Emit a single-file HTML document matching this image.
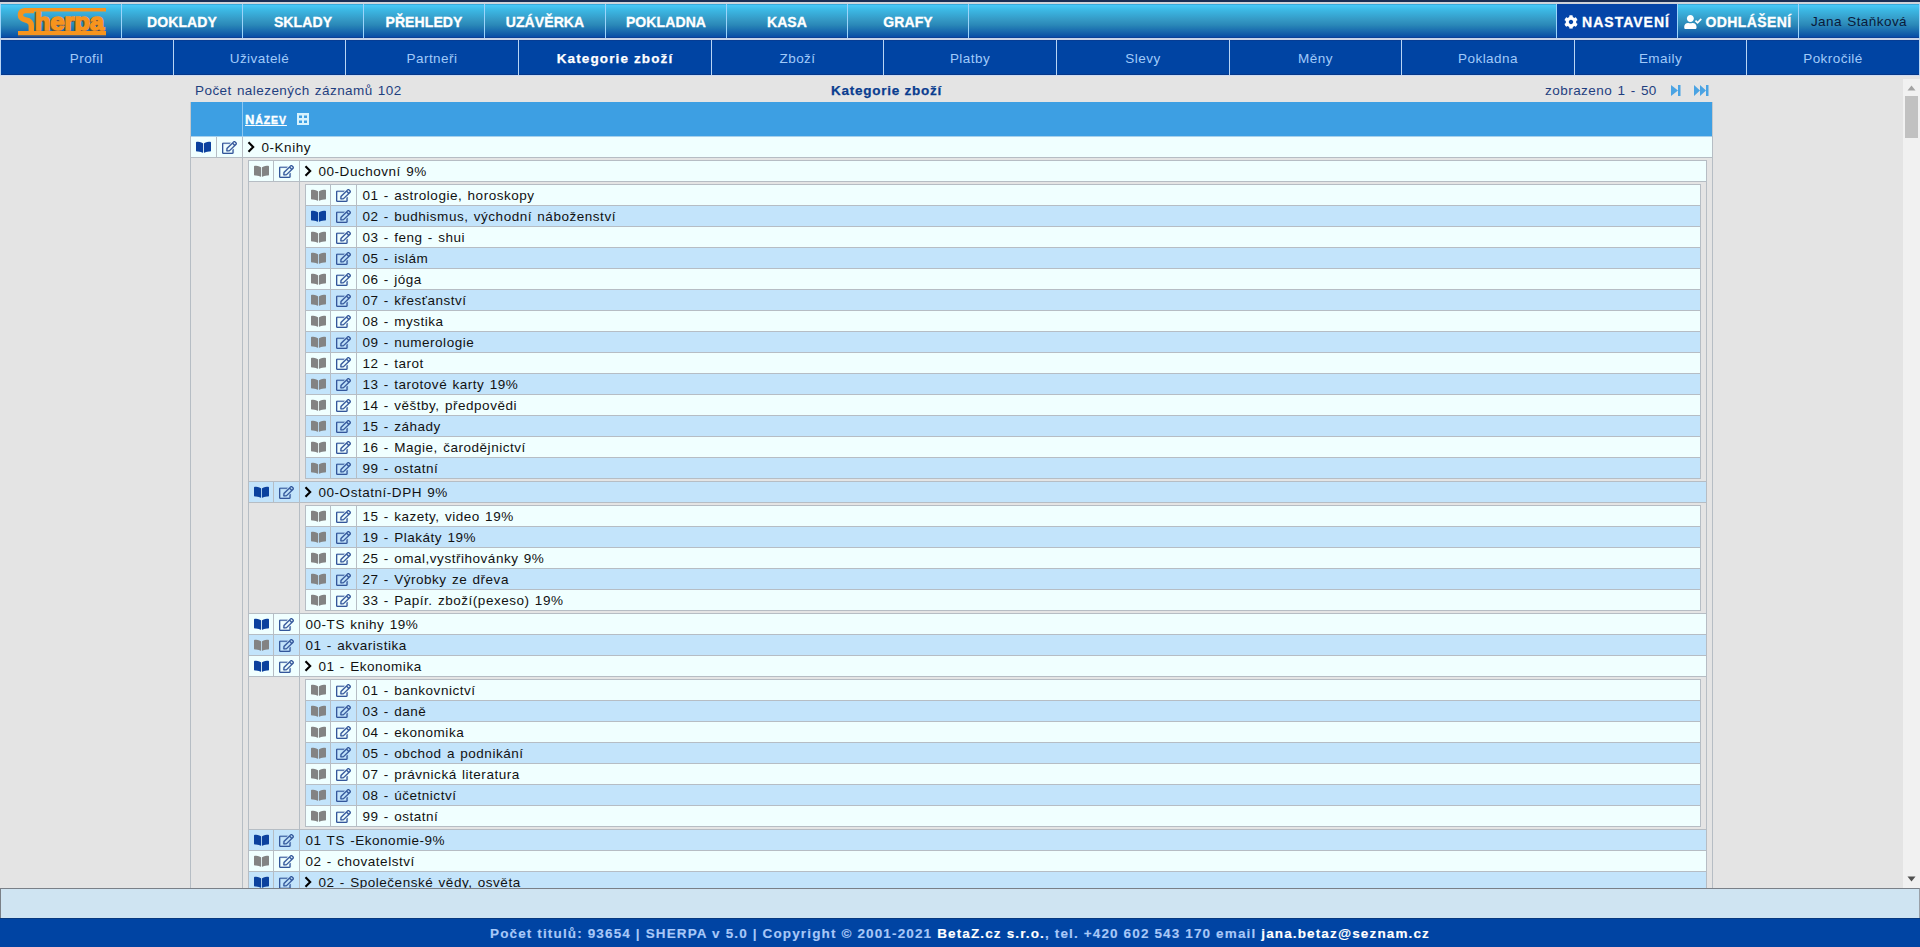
<!DOCTYPE html>
<html><head><meta charset="utf-8"><title>Kategorie zboží</title>
<style>
*{box-sizing:border-box;margin:0;padding:0}
html,body{width:1920px;height:947px;overflow:hidden;background:#e4e4e4;font-family:"Liberation Sans", sans-serif;}
.a{position:absolute}
.nav{position:absolute;top:4px;height:34px;background:linear-gradient(#2a8cc0 0px,#48c8f8 1px,#3cb8e4 6px,#3498c4 16px,#2a88b8 21px,#1c70b0 26px,#0e58a8 31px,#0448a8 34px);}
.navt{color:#fff;font-weight:bold;font-size:14px;line-height:36px;text-align:center;letter-spacing:0.1px;-webkit-text-stroke:0.3px #fff}
.sep{position:absolute;width:1px;background:#9cd4fa}
.sub{position:absolute;top:40px;height:35px;background:#0044a3;color:#a0cafa;font-size:13.5px;line-height:37px;text-align:center;letter-spacing:0.45px}
.t{font-size:13.5px;letter-spacing:0.53px;word-spacing:1.0px;color:#111111;white-space:pre;line-height:20px}
svg{display:block}
</style></head><body>

<div class="a" style="left:0;top:0;width:1920px;height:2px;background:#1a2e55"></div>
<div class="a" style="left:0;top:2px;width:1920px;height:2px;background:#cfd3da"></div>
<div class="a" style="left:0;top:38px;width:1920px;height:2px;background:#c8d4e8"></div>
<div class="nav" style="left:0;width:1920px"></div>
<div class="a" style="left:1557px;top:4px;width:120px;height:34px;background:#0545a8"></div>
<div class="a" style="left:0;top:37px;width:1920px;height:1px;background:#0a4196"></div>
<div class="sep" style="left:0px;top:4px;height:34px"></div>
<div class="sep" style="left:121px;top:4px;height:34px"></div>
<div class="sep" style="left:242px;top:4px;height:34px"></div>
<div class="sep" style="left:363px;top:4px;height:34px"></div>
<div class="sep" style="left:484px;top:4px;height:34px"></div>
<div class="sep" style="left:605px;top:4px;height:34px"></div>
<div class="sep" style="left:726px;top:4px;height:34px"></div>
<div class="sep" style="left:847px;top:4px;height:34px"></div>
<div class="sep" style="left:968px;top:4px;height:34px"></div>
<div class="sep" style="left:1556px;top:4px;height:34px"></div>
<div class="sep" style="left:1677px;top:4px;height:34px"></div>
<div class="sep" style="left:1798px;top:4px;height:34px"></div>
<div class="sep" style="left:1919px;top:4px;height:34px"></div>
<div class="a navt" style="left:122px;top:4px;width:120px;height:34px">DOKLADY</div>
<div class="a navt" style="left:243px;top:4px;width:120px;height:34px">SKLADY</div>
<div class="a navt" style="left:364px;top:4px;width:120px;height:34px">PŘEHLEDY</div>
<div class="a navt" style="left:485px;top:4px;width:120px;height:34px">UZÁVĚRKA</div>
<div class="a navt" style="left:606px;top:4px;width:120px;height:34px">POKLADNA</div>
<div class="a navt" style="left:727px;top:4px;width:120px;height:34px">KASA</div>
<div class="a navt" style="left:848px;top:4px;width:120px;height:34px">GRAFY</div>
<svg class="a" style="left:0;top:0" width="121" height="40" viewBox="0 0 121 40">
<defs><clipPath id="lc"><rect x="0" y="4" width="121" height="34"/></clipPath><clipPath id="lt"><rect x="0" y="11" width="121" height="20"/></clipPath></defs>
<g clip-path="url(#lc)">
<g clip-path="url(#lt)"><g transform="translate(-1,1)" fill="#6a5040" stroke="#6a5040" stroke-width="1.6">
<text x="35" y="29.5" font-family="Liberation Sans" font-weight="bold" font-size="24" textLength="69" lengthAdjust="spacingAndGlyphs">herpa</text>
</g></g>
<path d="M34 10.6 L25.5 10.6 C21.5 10.6 20.4 12.6 20.4 15 C20.4 18 23 19.3 26 20 C30 20.8 31.3 23 31.3 26 L31.3 32" stroke="#f7941d" stroke-width="5.4" fill="none"/>
<rect x="24" y="8" width="82" height="3.5" fill="#f7941d"/>
<rect x="18" y="36" width="88" height="1" fill="#5a4a50" opacity="0.6"/>
<text clip-path="url(#lt)" x="35" y="29.5" fill="#f7941d" stroke="#f7941d" stroke-width="1.6" font-family="Liberation Sans" font-weight="bold" font-size="24" textLength="69" lengthAdjust="spacingAndGlyphs">herpa</text>
<rect x="18" y="31" width="88" height="4.3" fill="#f7941d"/>
</g>
</svg>
<div class="a navt" style="left:1557px;top:4px;width:120px;height:34px"><span style="letter-spacing:1.0px"><svg width="14" height="14" viewBox="0 0 512 512" style="display:inline-block;vertical-align:-2px;margin-right:4px"><path fill="#fff" d="M487.4 315.7l-42.6-24.6c4.3-23.2 4.3-47 0-70.2l42.6-24.6c4.9-2.8 7.100-8.600 5.500-14-11.100-35.600-30-67.800-54.700-94.600-3.800-4.100-10-5.100-14.800-2.300L380.800 110c-17.900-15.400-38.500-27.300-60.800-35.100V25.800c0-5.600-3.900-10.500-9.400-11.700-36.700-8.200-74.300-7.800-109.200 0-5.500 1.200-9.400 6.100-9.400 11.700V75c-22.200 7.900-42.800 19.800-60.800 35.100L88.700 85.500c-4.900-2.800-11-1.900-14.800 2.300-24.700 26.700-43.600 58.900-54.700 94.600-1.700 5.400.6 11.200 5.500 14L67.300 221c-4.300 23.200-4.300 47 0 70.200l-42.600 24.600c-4.900 2.800-7.100 8.600-5.500 14 11.100 35.600 30 67.800 54.700 94.600 3.800 4.100 10 5.100 14.800 2.300l42.600-24.600c17.900 15.400 38.500 27.300 60.800 35.100v49.200c0 5.600 3.900 10.500 9.400 11.700 36.700 8.200 74.300 7.800 109.200 0 5.500-1.200 9.400-6.100 9.400-11.700v-49.200c22.200-7.900 42.800-19.800 60.800-35.100l42.600 24.600c4.900 2.800 11 1.900 14.800-2.300 24.700-26.700 43.600-58.900 54.700-94.600 1.500-5.500-.7-11.300-5.600-14.100zM256 336c-44.100 0-80-35.900-80-80s35.900-80 80-80 80 35.900 80 80-35.900 80-80 80z"/></svg>NASTAVENÍ</span></div>
<div class="a navt" style="left:1678px;top:4px;width:120px;height:34px"><span style="letter-spacing:0.4px"><svg width="18" height="14" viewBox="0 0 640 512" style="display:inline-block;vertical-align:-2px;margin-right:3px"><path fill="#fff" d="M224 256c70.700 0 128-57.300 128-128S294.700 0 224 0 96 57.300 96 128s57.300 128 128 128zm89.600 32h-16.700c-22.200 10.200-46.900 16-72.900 16s-50.600-5.800-72.900-16h-16.700C60.200 288 0 348.200 0 422.400V464c0 26.500 21.500 48 48 48h352c26.500 0 48-21.500 48-48v-41.600c0-74.200-60.200-134.400-134.400-134.400zm323-128.400l-27.800-28.100c-4.600-4.700-12.100-4.700-16.800-.1l-104.800 104-45.500-45.800c-4.600-4.700-12.100-4.700-16.800-.1l-28.100 27.900c-4.700 4.600-4.700 12.100-.1 16.800l81.700 82.300c4.600 4.700 12.100 4.700 16.800.1l141.300-140.200c4.600-4.700 4.700-12.200.1-16.800z"/></svg>ODHLÁŠENÍ</span></div>
<div class="a" style="left:1799px;top:4px;width:120px;height:34px;line-height:35px;text-align:center;color:#0a1a3a;font-size:13.5px;letter-spacing:0.45px;word-spacing:1px">Jana Staňková</div>
<div class="sub" style="left:0;width:1920px"></div>
<div class="sub" style="left:0px;width:173px;">Profil</div>
<div class="sub" style="left:174px;width:171px;">Uživatelé</div>
<div class="sub" style="left:346px;width:172px;">Partneři</div>
<div class="sub" style="left:519px;width:192px;color:#fff;font-weight:bold;letter-spacing:1.12px;-webkit-text-stroke:0.25px #fff;">Kategorie zboží</div>
<div class="sub" style="left:712px;width:171px;">Zboží</div>
<div class="sub" style="left:884px;width:172px;">Platby</div>
<div class="sub" style="left:1057px;width:172px;">Slevy</div>
<div class="sub" style="left:1230px;width:171px;">Měny</div>
<div class="sub" style="left:1402px;width:172px;">Pokladna</div>
<div class="sub" style="left:1575px;width:171px;">Emaily</div>
<div class="sub" style="left:1747px;width:172px;">Pokročilé</div>
<div class="a" style="left:0;top:40px;width:1920px;height:1px;background:#053c94"></div>
<div class="a" style="left:0;top:74px;width:1920px;height:1px;background:#06388a"></div>
<div class="sep" style="left:0px;top:40px;height:35px;background:#b8d4f4"></div>
<div class="sep" style="left:173px;top:40px;height:35px;background:#b8d4f4"></div>
<div class="sep" style="left:345px;top:40px;height:35px;background:#b8d4f4"></div>
<div class="sep" style="left:518px;top:40px;height:35px;background:#b8d4f4"></div>
<div class="sep" style="left:711px;top:40px;height:35px;background:#b8d4f4"></div>
<div class="sep" style="left:883px;top:40px;height:35px;background:#b8d4f4"></div>
<div class="sep" style="left:1056px;top:40px;height:35px;background:#b8d4f4"></div>
<div class="sep" style="left:1229px;top:40px;height:35px;background:#b8d4f4"></div>
<div class="sep" style="left:1401px;top:40px;height:35px;background:#b8d4f4"></div>
<div class="sep" style="left:1574px;top:40px;height:35px;background:#b8d4f4"></div>
<div class="sep" style="left:1746px;top:40px;height:35px;background:#b8d4f4"></div>
<div class="sep" style="left:1919px;top:40px;height:35px;background:#b8d4f4"></div>
<div class="a" style="left:0;top:75px;width:1920px;height:1px;background:#d0ddf2"></div>
<div class="a t" style="left:195px;top:81px;color:#1f3f7f;letter-spacing:0.44px;word-spacing:1px">Počet nalezených záznamů 102</div>
<div class="a t" style="left:0;top:81px;width:1773px;text-align:center;color:#0a3d8f;font-weight:bold;letter-spacing:0.75px;word-spacing:0;-webkit-text-stroke:0.25px #0a3d8f">Kategorie zboží</div>
<div class="a t" style="left:1545px;top:81px;color:#1f3f7f;letter-spacing:0.47px;word-spacing:1px">zobrazeno 1 - 50</div>
<svg class="a" style="left:1671px;top:85px" width="10" height="11" viewBox="0 0 10 11"><path d="M0 0 L7 5.5 L0 11Z" fill="#4aa3e3"/><rect x="7" y="0" width="2.5" height="11" fill="#4aa3e3"/></svg>
<svg class="a" style="left:1694px;top:85px" width="15" height="11" viewBox="0 0 15 11"><path d="M0 0 L6 5.5 L0 11Z M6 0 L12 5.5 L6 11Z" fill="#4aa3e3"/><rect x="12" y="0" width="2.5" height="11" fill="#4aa3e3"/></svg>
<div class="a" style="left:0;top:76px;width:1903px;height:812px;overflow:hidden">
<div class="a" style="left:191px;top:26px;width:1521px;height:34px;background:#3d9fe3;"></div>
<div class="a" style="left:191px;top:60px;width:1521px;height:1px;background:#a6d0ec;"></div>
<div class="a" style="left:190px;top:26px;width:1px;height:35px;background:#c4c8cc;"></div>
<div class="a" style="left:1712px;top:26px;width:1px;height:35px;background:#c4c8cc;"></div>
<div class="a" style="left:242px;top:26px;width:1px;height:34px;background:#8cc8f2;"></div>
<div class="a" style="left:245px;top:37px;line-height:14px;color:#fff;font-weight:bold;font-size:13px;text-decoration:underline;letter-spacing:0.9px;white-space:pre;-webkit-text-stroke:0.35px #fff">N<span style="font-size:10.5px">ÁZEV</span></div>
<svg class="a" style="left:297px;top:37px" width="12" height="12" viewBox="0 0 12 12"><path fill="#e8fbff" fill-rule="evenodd" d="M0 0H12V12H0Z M2 2.5H5V5H2Z M7 2.5H10V5H7Z M2 7.5H5V10H2Z M7 7.5H10V10H7Z" opacity="0.9"/></svg>
<div class="a" style="left:191px;top:61px;width:1521px;height:20px;background:#f0ffff;"></div>
<div class="a" style="left:190px;top:60px;width:1px;height:22px;background:#b6bdc4;"></div>
<div class="a" style="left:1712px;top:60px;width:1px;height:22px;background:#b6bdc4;"></div>
<div class="a" style="left:216px;top:61px;width:1px;height:20px;background:#b6bdc4;"></div>
<div class="a" style="left:242px;top:61px;width:1px;height:20px;background:#b6bdc4;"></div>
<div class="a" style="left:190px;top:81px;width:1523px;height:1px;background:#b6bdc4;"></div>
<svg class="a" style="left:196.2px;top:64.5px" width="15" height="12.5" viewBox="0 0 576 512" preserveAspectRatio="none"><path fill="#0b419e" d="M542.22 32.05c-54.8 3.11-163.72 14.43-230.96 55.59-4.64 2.84-7.27 7.89-7.27 13.17v363.87c0 11.55 12.63 18.85 23.28 13.49 69.18-34.82 169.23-44.32 218.7-46.92 16.89-.89 30.02-14.43 30.02-30.66V62.75c.01-17.71-15.35-31.74-33.77-30.7zM264.73 87.64C197.5 46.48 88.58 35.170 33.78 32.05 15.36 31.01 0 45.04 0 62.75V400.6c0 16.24 13.13 29.78 30.02 30.66 49.49 2.6 149.59 12.11 218.77 46.950 10.62 5.35 23.21-1.94 23.21-13.46V100.63c0-5.29-2.62-10.14-7.27-12.99z"/></svg>
<svg class="a" style="left:222.0px;top:65px" width="15" height="13" viewBox="0 0 576 512" preserveAspectRatio="none"><path fill="#34589c" stroke="#34589c" stroke-width="6" d="M402.3 344.9l32-32c5-5 13.7-1.5 13.7 5.7V464c0 26.5-21.5 48-48 48H48c-26.5 0-48-21.5-48-48V112c0-26.5 21.5-48 48-48h273.5c7.1 0 10.7 8.6 5.7 13.7l-32 32c-1.5 1.5-3.5 2.3-5.7 2.3H48v352h352V350.5c0-2.1.8-4.1 2.3-5.6zm156.6-201.8L296.3 405.7l-90.4 10c-26.2 2.9-48.5-19.2-45.6-45.6l10-90.4L432.9 17.1c22.9-22.9 59.9-22.9 82.7 0l43.2 43.2c22.9 22.9 22.9 60 .1 82.8zM460.1 174L402 115.9 216.2 301.8l-7.3 65.3 65.3-7.3L460.1 174zm64.8-79.7l-43.2-43.2c-4.1-4.1-10.8-4.1-14.8 0L436 82l58.1 58.1 30.9-30.9c4-4.2 4-10.8-.1-14.9z"/></svg>
<svg class="a" style="left:247px;top:65px" width="8" height="12" viewBox="0 0 8 12"><path d="M1.5 1.2 L6.2 6 L1.5 10.8" stroke="#000" stroke-width="2.1" fill="none"/></svg>
<div class="a t" style="left:261.5px;top:62px">0-Knihy</div>
<div class="a" style="left:190px;top:82px;width:1px;height:742px;background:#b6bdc4;"></div>
<div class="a" style="left:242px;top:82px;width:1px;height:742px;background:#b6bdc4;"></div>
<div class="a" style="left:1712px;top:82px;width:1px;height:742px;background:#b6bdc4;"></div>
<div class="a" style="left:190px;top:824px;width:1523px;height:1px;background:#b6bdc4;"></div>
<div class="a" style="left:248px;top:84px;width:1459px;height:1px;background:#b6bdc4;"></div>
<div class="a" style="left:249px;top:85px;width:1457px;height:20px;background:#f0ffff;"></div>
<div class="a" style="left:248px;top:84px;width:1px;height:22px;background:#b6bdc4;"></div>
<div class="a" style="left:1706px;top:84px;width:1px;height:22px;background:#b6bdc4;"></div>
<div class="a" style="left:273px;top:85px;width:1px;height:20px;background:#b6bdc4;"></div>
<div class="a" style="left:299px;top:85px;width:1px;height:20px;background:#b6bdc4;"></div>
<div class="a" style="left:248px;top:105px;width:1459px;height:1px;background:#b6bdc4;"></div>
<svg class="a" style="left:253.5px;top:88.5px" width="15" height="12.5" viewBox="0 0 576 512" preserveAspectRatio="none"><path fill="#838383" d="M542.22 32.05c-54.8 3.11-163.72 14.43-230.96 55.59-4.64 2.84-7.27 7.89-7.27 13.17v363.87c0 11.55 12.63 18.85 23.28 13.49 69.18-34.82 169.23-44.32 218.7-46.92 16.89-.89 30.02-14.43 30.02-30.66V62.75c.01-17.71-15.35-31.74-33.77-30.7zM264.73 87.64C197.5 46.48 88.58 35.170 33.78 32.05 15.36 31.01 0 45.04 0 62.75V400.6c0 16.24 13.13 29.78 30.02 30.66 49.49 2.6 149.59 12.11 218.77 46.950 10.62 5.35 23.21-1.94 23.21-13.46V100.63c0-5.29-2.62-10.14-7.27-12.99z"/></svg>
<svg class="a" style="left:279.0px;top:89px" width="15" height="13" viewBox="0 0 576 512" preserveAspectRatio="none"><path fill="#34589c" stroke="#34589c" stroke-width="6" d="M402.3 344.9l32-32c5-5 13.7-1.5 13.7 5.7V464c0 26.5-21.5 48-48 48H48c-26.5 0-48-21.5-48-48V112c0-26.5 21.5-48 48-48h273.5c7.1 0 10.7 8.6 5.7 13.7l-32 32c-1.5 1.5-3.5 2.3-5.7 2.3H48v352h352V350.5c0-2.1.8-4.1 2.3-5.6zm156.6-201.8L296.3 405.7l-90.4 10c-26.2 2.9-48.5-19.2-45.6-45.6l10-90.4L432.9 17.1c22.9-22.9 59.9-22.9 82.7 0l43.2 43.2c22.9 22.9 22.9 60 .1 82.8zM460.1 174L402 115.9 216.2 301.8l-7.3 65.3 65.3-7.3L460.1 174zm64.8-79.7l-43.2-43.2c-4.1-4.1-10.8-4.1-14.8 0L436 82l58.1 58.1 30.9-30.9c4-4.2 4-10.8-.1-14.9z"/></svg>
<svg class="a" style="left:304px;top:89px" width="8" height="12" viewBox="0 0 8 12"><path d="M1.5 1.2 L6.2 6 L1.5 10.8" stroke="#000" stroke-width="2.1" fill="none"/></svg>
<div class="a t" style="left:318.5px;top:86px">00-Duchovní 9%</div>
<div class="a" style="left:305px;top:108px;width:1396px;height:1px;background:#b6bdc4;"></div>
<div class="a" style="left:306px;top:109px;width:1394px;height:20px;background:#f0ffff;"></div>
<div class="a" style="left:305px;top:108px;width:1px;height:22px;background:#b6bdc4;"></div>
<div class="a" style="left:1700px;top:108px;width:1px;height:22px;background:#b6bdc4;"></div>
<div class="a" style="left:330px;top:109px;width:1px;height:20px;background:#b6bdc4;"></div>
<div class="a" style="left:356px;top:109px;width:1px;height:20px;background:#b6bdc4;"></div>
<div class="a" style="left:305px;top:129px;width:1396px;height:1px;background:#b6bdc4;"></div>
<svg class="a" style="left:310.5px;top:112.5px" width="15" height="12.5" viewBox="0 0 576 512" preserveAspectRatio="none"><path fill="#838383" d="M542.22 32.05c-54.8 3.11-163.72 14.43-230.96 55.59-4.64 2.84-7.27 7.89-7.27 13.17v363.87c0 11.55 12.63 18.85 23.28 13.49 69.18-34.82 169.23-44.32 218.7-46.92 16.89-.89 30.02-14.43 30.02-30.66V62.75c.01-17.71-15.35-31.74-33.77-30.7zM264.73 87.64C197.5 46.48 88.58 35.170 33.78 32.05 15.36 31.01 0 45.04 0 62.75V400.6c0 16.24 13.13 29.78 30.02 30.66 49.49 2.6 149.59 12.11 218.77 46.950 10.62 5.35 23.21-1.94 23.21-13.46V100.63c0-5.29-2.62-10.14-7.27-12.99z"/></svg>
<svg class="a" style="left:336.0px;top:113px" width="15" height="13" viewBox="0 0 576 512" preserveAspectRatio="none"><path fill="#34589c" stroke="#34589c" stroke-width="6" d="M402.3 344.9l32-32c5-5 13.7-1.5 13.7 5.7V464c0 26.5-21.5 48-48 48H48c-26.5 0-48-21.5-48-48V112c0-26.5 21.5-48 48-48h273.5c7.1 0 10.7 8.6 5.7 13.7l-32 32c-1.5 1.5-3.5 2.3-5.7 2.3H48v352h352V350.5c0-2.1.8-4.1 2.3-5.6zm156.6-201.8L296.3 405.7l-90.4 10c-26.2 2.9-48.5-19.2-45.6-45.6l10-90.4L432.9 17.1c22.9-22.9 59.9-22.9 82.7 0l43.2 43.2c22.9 22.9 22.9 60 .1 82.8zM460.1 174L402 115.9 216.2 301.8l-7.3 65.3 65.3-7.3L460.1 174zm64.8-79.7l-43.2-43.2c-4.1-4.1-10.8-4.1-14.8 0L436 82l58.1 58.1 30.9-30.9c4-4.2 4-10.8-.1-14.9z"/></svg>
<div class="a t" style="left:362.5px;top:110px">01 - astrologie, horoskopy</div>
<div class="a" style="left:306px;top:130px;width:1394px;height:20px;background:#c3e4fb;"></div>
<div class="a" style="left:305px;top:129px;width:1px;height:22px;background:#b6bdc4;"></div>
<div class="a" style="left:1700px;top:129px;width:1px;height:22px;background:#b6bdc4;"></div>
<div class="a" style="left:330px;top:130px;width:1px;height:20px;background:#b6bdc4;"></div>
<div class="a" style="left:356px;top:130px;width:1px;height:20px;background:#b6bdc4;"></div>
<div class="a" style="left:305px;top:150px;width:1396px;height:1px;background:#b6bdc4;"></div>
<svg class="a" style="left:310.5px;top:133.5px" width="15" height="12.5" viewBox="0 0 576 512" preserveAspectRatio="none"><path fill="#0b419e" d="M542.22 32.05c-54.8 3.11-163.72 14.43-230.96 55.59-4.64 2.84-7.27 7.89-7.27 13.17v363.87c0 11.55 12.63 18.85 23.28 13.49 69.18-34.82 169.23-44.32 218.7-46.92 16.89-.89 30.02-14.43 30.02-30.66V62.75c.01-17.71-15.35-31.74-33.77-30.7zM264.73 87.64C197.5 46.48 88.58 35.170 33.78 32.05 15.36 31.01 0 45.04 0 62.75V400.6c0 16.24 13.13 29.78 30.02 30.66 49.49 2.6 149.59 12.11 218.77 46.950 10.62 5.35 23.21-1.94 23.21-13.46V100.63c0-5.29-2.62-10.14-7.27-12.99z"/></svg>
<svg class="a" style="left:336.0px;top:134px" width="15" height="13" viewBox="0 0 576 512" preserveAspectRatio="none"><path fill="#34589c" stroke="#34589c" stroke-width="6" d="M402.3 344.9l32-32c5-5 13.7-1.5 13.7 5.7V464c0 26.5-21.5 48-48 48H48c-26.5 0-48-21.5-48-48V112c0-26.5 21.5-48 48-48h273.5c7.1 0 10.7 8.6 5.7 13.7l-32 32c-1.5 1.5-3.5 2.3-5.7 2.3H48v352h352V350.5c0-2.1.8-4.1 2.3-5.6zm156.6-201.8L296.3 405.7l-90.4 10c-26.2 2.9-48.5-19.2-45.6-45.6l10-90.4L432.9 17.1c22.9-22.9 59.9-22.9 82.7 0l43.2 43.2c22.9 22.9 22.9 60 .1 82.8zM460.1 174L402 115.9 216.2 301.8l-7.3 65.3 65.3-7.3L460.1 174zm64.8-79.7l-43.2-43.2c-4.1-4.1-10.8-4.1-14.8 0L436 82l58.1 58.1 30.9-30.9c4-4.2 4-10.8-.1-14.9z"/></svg>
<div class="a t" style="left:362.5px;top:131px">02 - budhismus, východní náboženství</div>
<div class="a" style="left:306px;top:151px;width:1394px;height:20px;background:#f0ffff;"></div>
<div class="a" style="left:305px;top:150px;width:1px;height:22px;background:#b6bdc4;"></div>
<div class="a" style="left:1700px;top:150px;width:1px;height:22px;background:#b6bdc4;"></div>
<div class="a" style="left:330px;top:151px;width:1px;height:20px;background:#b6bdc4;"></div>
<div class="a" style="left:356px;top:151px;width:1px;height:20px;background:#b6bdc4;"></div>
<div class="a" style="left:305px;top:171px;width:1396px;height:1px;background:#b6bdc4;"></div>
<svg class="a" style="left:310.5px;top:154.5px" width="15" height="12.5" viewBox="0 0 576 512" preserveAspectRatio="none"><path fill="#838383" d="M542.22 32.05c-54.8 3.11-163.72 14.43-230.96 55.59-4.64 2.84-7.27 7.89-7.27 13.17v363.87c0 11.55 12.63 18.85 23.28 13.49 69.18-34.82 169.23-44.32 218.7-46.92 16.89-.89 30.02-14.43 30.02-30.66V62.75c.01-17.71-15.35-31.74-33.77-30.7zM264.73 87.64C197.5 46.48 88.58 35.170 33.78 32.05 15.36 31.01 0 45.04 0 62.75V400.6c0 16.24 13.13 29.78 30.02 30.66 49.49 2.6 149.59 12.11 218.77 46.950 10.62 5.35 23.21-1.94 23.21-13.46V100.63c0-5.29-2.62-10.14-7.27-12.99z"/></svg>
<svg class="a" style="left:336.0px;top:155px" width="15" height="13" viewBox="0 0 576 512" preserveAspectRatio="none"><path fill="#34589c" stroke="#34589c" stroke-width="6" d="M402.3 344.9l32-32c5-5 13.7-1.5 13.7 5.7V464c0 26.5-21.5 48-48 48H48c-26.5 0-48-21.5-48-48V112c0-26.5 21.5-48 48-48h273.5c7.1 0 10.7 8.6 5.7 13.7l-32 32c-1.5 1.5-3.5 2.3-5.7 2.3H48v352h352V350.5c0-2.1.8-4.1 2.3-5.6zm156.6-201.8L296.3 405.7l-90.4 10c-26.2 2.9-48.5-19.2-45.6-45.6l10-90.4L432.9 17.1c22.9-22.9 59.9-22.9 82.7 0l43.2 43.2c22.9 22.9 22.9 60 .1 82.8zM460.1 174L402 115.9 216.2 301.8l-7.3 65.3 65.3-7.3L460.1 174zm64.8-79.7l-43.2-43.2c-4.1-4.1-10.8-4.1-14.8 0L436 82l58.1 58.1 30.9-30.9c4-4.2 4-10.8-.1-14.9z"/></svg>
<div class="a t" style="left:362.5px;top:152px">03 - feng - shui</div>
<div class="a" style="left:306px;top:172px;width:1394px;height:20px;background:#c3e4fb;"></div>
<div class="a" style="left:305px;top:171px;width:1px;height:22px;background:#b6bdc4;"></div>
<div class="a" style="left:1700px;top:171px;width:1px;height:22px;background:#b6bdc4;"></div>
<div class="a" style="left:330px;top:172px;width:1px;height:20px;background:#b6bdc4;"></div>
<div class="a" style="left:356px;top:172px;width:1px;height:20px;background:#b6bdc4;"></div>
<div class="a" style="left:305px;top:192px;width:1396px;height:1px;background:#b6bdc4;"></div>
<svg class="a" style="left:310.5px;top:175.5px" width="15" height="12.5" viewBox="0 0 576 512" preserveAspectRatio="none"><path fill="#838383" d="M542.22 32.05c-54.8 3.11-163.72 14.43-230.96 55.59-4.64 2.84-7.27 7.89-7.27 13.17v363.87c0 11.55 12.63 18.85 23.28 13.49 69.18-34.82 169.23-44.32 218.7-46.92 16.89-.89 30.02-14.43 30.02-30.66V62.75c.01-17.71-15.35-31.74-33.77-30.7zM264.73 87.64C197.5 46.48 88.58 35.170 33.78 32.05 15.36 31.01 0 45.04 0 62.75V400.6c0 16.24 13.13 29.78 30.02 30.66 49.49 2.6 149.59 12.11 218.77 46.950 10.62 5.35 23.21-1.94 23.21-13.46V100.63c0-5.29-2.62-10.14-7.27-12.99z"/></svg>
<svg class="a" style="left:336.0px;top:176px" width="15" height="13" viewBox="0 0 576 512" preserveAspectRatio="none"><path fill="#34589c" stroke="#34589c" stroke-width="6" d="M402.3 344.9l32-32c5-5 13.7-1.5 13.7 5.7V464c0 26.5-21.5 48-48 48H48c-26.5 0-48-21.5-48-48V112c0-26.5 21.5-48 48-48h273.5c7.1 0 10.7 8.6 5.7 13.7l-32 32c-1.5 1.5-3.5 2.3-5.7 2.3H48v352h352V350.5c0-2.1.8-4.1 2.3-5.6zm156.6-201.8L296.3 405.7l-90.4 10c-26.2 2.9-48.5-19.2-45.6-45.6l10-90.4L432.9 17.1c22.9-22.9 59.9-22.9 82.7 0l43.2 43.2c22.9 22.9 22.9 60 .1 82.8zM460.1 174L402 115.9 216.2 301.8l-7.3 65.3 65.3-7.3L460.1 174zm64.8-79.7l-43.2-43.2c-4.1-4.1-10.8-4.1-14.8 0L436 82l58.1 58.1 30.9-30.9c4-4.2 4-10.8-.1-14.9z"/></svg>
<div class="a t" style="left:362.5px;top:173px">05 - islám</div>
<div class="a" style="left:306px;top:193px;width:1394px;height:20px;background:#f0ffff;"></div>
<div class="a" style="left:305px;top:192px;width:1px;height:22px;background:#b6bdc4;"></div>
<div class="a" style="left:1700px;top:192px;width:1px;height:22px;background:#b6bdc4;"></div>
<div class="a" style="left:330px;top:193px;width:1px;height:20px;background:#b6bdc4;"></div>
<div class="a" style="left:356px;top:193px;width:1px;height:20px;background:#b6bdc4;"></div>
<div class="a" style="left:305px;top:213px;width:1396px;height:1px;background:#b6bdc4;"></div>
<svg class="a" style="left:310.5px;top:196.5px" width="15" height="12.5" viewBox="0 0 576 512" preserveAspectRatio="none"><path fill="#838383" d="M542.22 32.05c-54.8 3.11-163.72 14.43-230.96 55.59-4.64 2.84-7.27 7.89-7.27 13.17v363.87c0 11.55 12.63 18.85 23.28 13.49 69.18-34.82 169.23-44.32 218.7-46.92 16.89-.89 30.02-14.43 30.02-30.66V62.75c.01-17.71-15.35-31.74-33.77-30.7zM264.73 87.64C197.5 46.48 88.58 35.170 33.78 32.05 15.36 31.01 0 45.04 0 62.75V400.6c0 16.24 13.13 29.78 30.02 30.66 49.49 2.6 149.59 12.11 218.77 46.950 10.62 5.35 23.21-1.94 23.21-13.46V100.63c0-5.29-2.62-10.14-7.27-12.99z"/></svg>
<svg class="a" style="left:336.0px;top:197px" width="15" height="13" viewBox="0 0 576 512" preserveAspectRatio="none"><path fill="#34589c" stroke="#34589c" stroke-width="6" d="M402.3 344.9l32-32c5-5 13.7-1.5 13.7 5.7V464c0 26.5-21.5 48-48 48H48c-26.5 0-48-21.5-48-48V112c0-26.5 21.5-48 48-48h273.5c7.1 0 10.7 8.6 5.7 13.7l-32 32c-1.5 1.5-3.5 2.3-5.7 2.3H48v352h352V350.5c0-2.1.8-4.1 2.3-5.6zm156.6-201.8L296.3 405.7l-90.4 10c-26.2 2.9-48.5-19.2-45.6-45.6l10-90.4L432.9 17.1c22.9-22.9 59.9-22.9 82.7 0l43.2 43.2c22.9 22.9 22.9 60 .1 82.8zM460.1 174L402 115.9 216.2 301.8l-7.3 65.3 65.3-7.3L460.1 174zm64.8-79.7l-43.2-43.2c-4.1-4.1-10.8-4.1-14.8 0L436 82l58.1 58.1 30.9-30.9c4-4.2 4-10.8-.1-14.9z"/></svg>
<div class="a t" style="left:362.5px;top:194px">06 - jóga</div>
<div class="a" style="left:306px;top:214px;width:1394px;height:20px;background:#c3e4fb;"></div>
<div class="a" style="left:305px;top:213px;width:1px;height:22px;background:#b6bdc4;"></div>
<div class="a" style="left:1700px;top:213px;width:1px;height:22px;background:#b6bdc4;"></div>
<div class="a" style="left:330px;top:214px;width:1px;height:20px;background:#b6bdc4;"></div>
<div class="a" style="left:356px;top:214px;width:1px;height:20px;background:#b6bdc4;"></div>
<div class="a" style="left:305px;top:234px;width:1396px;height:1px;background:#b6bdc4;"></div>
<svg class="a" style="left:310.5px;top:217.5px" width="15" height="12.5" viewBox="0 0 576 512" preserveAspectRatio="none"><path fill="#838383" d="M542.22 32.05c-54.8 3.11-163.72 14.43-230.96 55.59-4.64 2.84-7.27 7.89-7.27 13.17v363.87c0 11.55 12.63 18.85 23.28 13.49 69.18-34.82 169.23-44.32 218.7-46.92 16.89-.89 30.02-14.43 30.02-30.66V62.75c.01-17.71-15.35-31.74-33.77-30.7zM264.73 87.64C197.5 46.48 88.58 35.170 33.78 32.05 15.36 31.01 0 45.04 0 62.75V400.6c0 16.24 13.13 29.78 30.02 30.66 49.49 2.6 149.59 12.11 218.77 46.950 10.62 5.35 23.21-1.94 23.21-13.46V100.63c0-5.29-2.62-10.14-7.27-12.99z"/></svg>
<svg class="a" style="left:336.0px;top:218px" width="15" height="13" viewBox="0 0 576 512" preserveAspectRatio="none"><path fill="#34589c" stroke="#34589c" stroke-width="6" d="M402.3 344.9l32-32c5-5 13.7-1.5 13.7 5.7V464c0 26.5-21.5 48-48 48H48c-26.5 0-48-21.5-48-48V112c0-26.5 21.5-48 48-48h273.5c7.1 0 10.7 8.6 5.7 13.7l-32 32c-1.5 1.5-3.5 2.3-5.7 2.3H48v352h352V350.5c0-2.1.8-4.1 2.3-5.6zm156.6-201.8L296.3 405.7l-90.4 10c-26.2 2.9-48.5-19.2-45.6-45.6l10-90.4L432.9 17.1c22.9-22.9 59.9-22.9 82.7 0l43.2 43.2c22.9 22.9 22.9 60 .1 82.8zM460.1 174L402 115.9 216.2 301.8l-7.3 65.3 65.3-7.3L460.1 174zm64.8-79.7l-43.2-43.2c-4.1-4.1-10.8-4.1-14.8 0L436 82l58.1 58.1 30.9-30.9c4-4.2 4-10.8-.1-14.9z"/></svg>
<div class="a t" style="left:362.5px;top:215px">07 - křesťanství</div>
<div class="a" style="left:306px;top:235px;width:1394px;height:20px;background:#f0ffff;"></div>
<div class="a" style="left:305px;top:234px;width:1px;height:22px;background:#b6bdc4;"></div>
<div class="a" style="left:1700px;top:234px;width:1px;height:22px;background:#b6bdc4;"></div>
<div class="a" style="left:330px;top:235px;width:1px;height:20px;background:#b6bdc4;"></div>
<div class="a" style="left:356px;top:235px;width:1px;height:20px;background:#b6bdc4;"></div>
<div class="a" style="left:305px;top:255px;width:1396px;height:1px;background:#b6bdc4;"></div>
<svg class="a" style="left:310.5px;top:238.5px" width="15" height="12.5" viewBox="0 0 576 512" preserveAspectRatio="none"><path fill="#838383" d="M542.22 32.05c-54.8 3.11-163.72 14.43-230.96 55.59-4.64 2.84-7.27 7.89-7.27 13.17v363.87c0 11.55 12.63 18.85 23.28 13.49 69.18-34.82 169.23-44.32 218.7-46.92 16.89-.89 30.02-14.43 30.02-30.66V62.75c.01-17.71-15.35-31.74-33.77-30.7zM264.73 87.64C197.5 46.48 88.58 35.170 33.78 32.05 15.36 31.01 0 45.04 0 62.75V400.6c0 16.24 13.13 29.78 30.02 30.66 49.49 2.6 149.59 12.11 218.77 46.950 10.62 5.35 23.21-1.94 23.21-13.46V100.63c0-5.29-2.62-10.14-7.27-12.99z"/></svg>
<svg class="a" style="left:336.0px;top:239px" width="15" height="13" viewBox="0 0 576 512" preserveAspectRatio="none"><path fill="#34589c" stroke="#34589c" stroke-width="6" d="M402.3 344.9l32-32c5-5 13.7-1.5 13.7 5.7V464c0 26.5-21.5 48-48 48H48c-26.5 0-48-21.5-48-48V112c0-26.5 21.5-48 48-48h273.5c7.1 0 10.7 8.6 5.7 13.7l-32 32c-1.5 1.5-3.5 2.3-5.7 2.3H48v352h352V350.5c0-2.1.8-4.1 2.3-5.6zm156.6-201.8L296.3 405.7l-90.4 10c-26.2 2.9-48.5-19.2-45.6-45.6l10-90.4L432.9 17.1c22.9-22.9 59.9-22.9 82.7 0l43.2 43.2c22.9 22.9 22.9 60 .1 82.8zM460.1 174L402 115.9 216.2 301.8l-7.3 65.3 65.3-7.3L460.1 174zm64.8-79.7l-43.2-43.2c-4.1-4.1-10.8-4.1-14.8 0L436 82l58.1 58.1 30.9-30.9c4-4.2 4-10.8-.1-14.9z"/></svg>
<div class="a t" style="left:362.5px;top:236px">08 - mystika</div>
<div class="a" style="left:306px;top:256px;width:1394px;height:20px;background:#c3e4fb;"></div>
<div class="a" style="left:305px;top:255px;width:1px;height:22px;background:#b6bdc4;"></div>
<div class="a" style="left:1700px;top:255px;width:1px;height:22px;background:#b6bdc4;"></div>
<div class="a" style="left:330px;top:256px;width:1px;height:20px;background:#b6bdc4;"></div>
<div class="a" style="left:356px;top:256px;width:1px;height:20px;background:#b6bdc4;"></div>
<div class="a" style="left:305px;top:276px;width:1396px;height:1px;background:#b6bdc4;"></div>
<svg class="a" style="left:310.5px;top:259.5px" width="15" height="12.5" viewBox="0 0 576 512" preserveAspectRatio="none"><path fill="#838383" d="M542.22 32.05c-54.8 3.11-163.72 14.43-230.96 55.59-4.64 2.84-7.27 7.89-7.27 13.17v363.87c0 11.55 12.63 18.85 23.28 13.49 69.18-34.82 169.23-44.32 218.7-46.92 16.89-.89 30.02-14.43 30.02-30.66V62.75c.01-17.71-15.35-31.74-33.77-30.7zM264.73 87.64C197.5 46.48 88.58 35.170 33.78 32.05 15.36 31.01 0 45.04 0 62.75V400.6c0 16.24 13.13 29.78 30.02 30.66 49.49 2.6 149.59 12.11 218.77 46.950 10.62 5.35 23.21-1.94 23.21-13.46V100.63c0-5.29-2.62-10.14-7.27-12.99z"/></svg>
<svg class="a" style="left:336.0px;top:260px" width="15" height="13" viewBox="0 0 576 512" preserveAspectRatio="none"><path fill="#34589c" stroke="#34589c" stroke-width="6" d="M402.3 344.9l32-32c5-5 13.7-1.5 13.7 5.7V464c0 26.5-21.5 48-48 48H48c-26.5 0-48-21.5-48-48V112c0-26.5 21.5-48 48-48h273.5c7.1 0 10.7 8.6 5.7 13.7l-32 32c-1.5 1.5-3.5 2.3-5.7 2.3H48v352h352V350.5c0-2.1.8-4.1 2.3-5.6zm156.6-201.8L296.3 405.7l-90.4 10c-26.2 2.9-48.5-19.2-45.6-45.6l10-90.4L432.9 17.1c22.9-22.9 59.9-22.9 82.7 0l43.2 43.2c22.9 22.9 22.9 60 .1 82.8zM460.1 174L402 115.9 216.2 301.8l-7.3 65.3 65.3-7.3L460.1 174zm64.8-79.7l-43.2-43.2c-4.1-4.1-10.8-4.1-14.8 0L436 82l58.1 58.1 30.9-30.9c4-4.2 4-10.8-.1-14.9z"/></svg>
<div class="a t" style="left:362.5px;top:257px">09 - numerologie</div>
<div class="a" style="left:306px;top:277px;width:1394px;height:20px;background:#f0ffff;"></div>
<div class="a" style="left:305px;top:276px;width:1px;height:22px;background:#b6bdc4;"></div>
<div class="a" style="left:1700px;top:276px;width:1px;height:22px;background:#b6bdc4;"></div>
<div class="a" style="left:330px;top:277px;width:1px;height:20px;background:#b6bdc4;"></div>
<div class="a" style="left:356px;top:277px;width:1px;height:20px;background:#b6bdc4;"></div>
<div class="a" style="left:305px;top:297px;width:1396px;height:1px;background:#b6bdc4;"></div>
<svg class="a" style="left:310.5px;top:280.5px" width="15" height="12.5" viewBox="0 0 576 512" preserveAspectRatio="none"><path fill="#838383" d="M542.22 32.05c-54.8 3.11-163.72 14.43-230.96 55.59-4.64 2.84-7.27 7.89-7.27 13.17v363.87c0 11.55 12.63 18.85 23.28 13.49 69.18-34.82 169.23-44.32 218.7-46.92 16.89-.89 30.02-14.43 30.02-30.66V62.75c.01-17.71-15.35-31.74-33.77-30.7zM264.73 87.64C197.5 46.48 88.58 35.170 33.78 32.05 15.36 31.01 0 45.04 0 62.75V400.6c0 16.24 13.13 29.78 30.02 30.66 49.49 2.6 149.59 12.11 218.77 46.950 10.62 5.35 23.21-1.94 23.21-13.46V100.63c0-5.29-2.62-10.14-7.27-12.99z"/></svg>
<svg class="a" style="left:336.0px;top:281px" width="15" height="13" viewBox="0 0 576 512" preserveAspectRatio="none"><path fill="#34589c" stroke="#34589c" stroke-width="6" d="M402.3 344.9l32-32c5-5 13.7-1.5 13.7 5.7V464c0 26.5-21.5 48-48 48H48c-26.5 0-48-21.5-48-48V112c0-26.5 21.5-48 48-48h273.5c7.1 0 10.7 8.6 5.7 13.7l-32 32c-1.5 1.5-3.5 2.3-5.7 2.3H48v352h352V350.5c0-2.1.8-4.1 2.3-5.6zm156.6-201.8L296.3 405.7l-90.4 10c-26.2 2.9-48.5-19.2-45.6-45.6l10-90.4L432.9 17.1c22.9-22.9 59.9-22.9 82.7 0l43.2 43.2c22.9 22.9 22.9 60 .1 82.8zM460.1 174L402 115.9 216.2 301.8l-7.3 65.3 65.3-7.3L460.1 174zm64.8-79.7l-43.2-43.2c-4.1-4.1-10.8-4.1-14.8 0L436 82l58.1 58.1 30.9-30.9c4-4.2 4-10.8-.1-14.9z"/></svg>
<div class="a t" style="left:362.5px;top:278px">12 - tarot</div>
<div class="a" style="left:306px;top:298px;width:1394px;height:20px;background:#c3e4fb;"></div>
<div class="a" style="left:305px;top:297px;width:1px;height:22px;background:#b6bdc4;"></div>
<div class="a" style="left:1700px;top:297px;width:1px;height:22px;background:#b6bdc4;"></div>
<div class="a" style="left:330px;top:298px;width:1px;height:20px;background:#b6bdc4;"></div>
<div class="a" style="left:356px;top:298px;width:1px;height:20px;background:#b6bdc4;"></div>
<div class="a" style="left:305px;top:318px;width:1396px;height:1px;background:#b6bdc4;"></div>
<svg class="a" style="left:310.5px;top:301.5px" width="15" height="12.5" viewBox="0 0 576 512" preserveAspectRatio="none"><path fill="#838383" d="M542.22 32.05c-54.8 3.11-163.72 14.43-230.96 55.59-4.64 2.84-7.27 7.89-7.27 13.17v363.87c0 11.55 12.63 18.85 23.28 13.49 69.18-34.82 169.23-44.32 218.7-46.92 16.89-.89 30.02-14.43 30.02-30.66V62.75c.01-17.71-15.35-31.74-33.77-30.7zM264.73 87.64C197.5 46.48 88.58 35.170 33.78 32.05 15.36 31.01 0 45.04 0 62.75V400.6c0 16.24 13.13 29.78 30.02 30.66 49.49 2.6 149.59 12.11 218.77 46.950 10.62 5.35 23.21-1.94 23.21-13.46V100.63c0-5.29-2.62-10.14-7.27-12.99z"/></svg>
<svg class="a" style="left:336.0px;top:302px" width="15" height="13" viewBox="0 0 576 512" preserveAspectRatio="none"><path fill="#34589c" stroke="#34589c" stroke-width="6" d="M402.3 344.9l32-32c5-5 13.7-1.5 13.7 5.7V464c0 26.5-21.5 48-48 48H48c-26.5 0-48-21.5-48-48V112c0-26.5 21.5-48 48-48h273.5c7.1 0 10.7 8.6 5.7 13.7l-32 32c-1.5 1.5-3.5 2.3-5.7 2.3H48v352h352V350.5c0-2.1.8-4.1 2.3-5.6zm156.6-201.8L296.3 405.7l-90.4 10c-26.2 2.9-48.5-19.2-45.6-45.6l10-90.4L432.9 17.1c22.9-22.9 59.9-22.9 82.7 0l43.2 43.2c22.9 22.9 22.9 60 .1 82.8zM460.1 174L402 115.9 216.2 301.8l-7.3 65.3 65.3-7.3L460.1 174zm64.8-79.7l-43.2-43.2c-4.1-4.1-10.8-4.1-14.8 0L436 82l58.1 58.1 30.9-30.9c4-4.2 4-10.8-.1-14.9z"/></svg>
<div class="a t" style="left:362.5px;top:299px">13 - tarotové karty 19%</div>
<div class="a" style="left:306px;top:319px;width:1394px;height:20px;background:#f0ffff;"></div>
<div class="a" style="left:305px;top:318px;width:1px;height:22px;background:#b6bdc4;"></div>
<div class="a" style="left:1700px;top:318px;width:1px;height:22px;background:#b6bdc4;"></div>
<div class="a" style="left:330px;top:319px;width:1px;height:20px;background:#b6bdc4;"></div>
<div class="a" style="left:356px;top:319px;width:1px;height:20px;background:#b6bdc4;"></div>
<div class="a" style="left:305px;top:339px;width:1396px;height:1px;background:#b6bdc4;"></div>
<svg class="a" style="left:310.5px;top:322.5px" width="15" height="12.5" viewBox="0 0 576 512" preserveAspectRatio="none"><path fill="#838383" d="M542.22 32.05c-54.8 3.11-163.72 14.43-230.96 55.59-4.64 2.84-7.27 7.89-7.27 13.17v363.87c0 11.55 12.63 18.85 23.28 13.49 69.18-34.82 169.23-44.32 218.7-46.92 16.89-.89 30.02-14.43 30.02-30.66V62.75c.01-17.71-15.35-31.74-33.77-30.7zM264.73 87.64C197.5 46.48 88.58 35.170 33.78 32.05 15.36 31.01 0 45.04 0 62.75V400.6c0 16.24 13.13 29.78 30.02 30.66 49.49 2.6 149.59 12.11 218.77 46.950 10.62 5.35 23.21-1.94 23.21-13.46V100.63c0-5.29-2.62-10.14-7.27-12.99z"/></svg>
<svg class="a" style="left:336.0px;top:323px" width="15" height="13" viewBox="0 0 576 512" preserveAspectRatio="none"><path fill="#34589c" stroke="#34589c" stroke-width="6" d="M402.3 344.9l32-32c5-5 13.7-1.5 13.7 5.7V464c0 26.5-21.5 48-48 48H48c-26.5 0-48-21.5-48-48V112c0-26.5 21.5-48 48-48h273.5c7.1 0 10.7 8.6 5.7 13.7l-32 32c-1.5 1.5-3.5 2.3-5.7 2.3H48v352h352V350.5c0-2.1.8-4.1 2.3-5.6zm156.6-201.8L296.3 405.7l-90.4 10c-26.2 2.9-48.5-19.2-45.6-45.6l10-90.4L432.9 17.1c22.9-22.9 59.9-22.9 82.7 0l43.2 43.2c22.9 22.9 22.9 60 .1 82.8zM460.1 174L402 115.9 216.2 301.8l-7.3 65.3 65.3-7.3L460.1 174zm64.8-79.7l-43.2-43.2c-4.1-4.1-10.8-4.1-14.8 0L436 82l58.1 58.1 30.9-30.9c4-4.2 4-10.8-.1-14.9z"/></svg>
<div class="a t" style="left:362.5px;top:320px">14 - věštby, předpovědi</div>
<div class="a" style="left:306px;top:340px;width:1394px;height:20px;background:#c3e4fb;"></div>
<div class="a" style="left:305px;top:339px;width:1px;height:22px;background:#b6bdc4;"></div>
<div class="a" style="left:1700px;top:339px;width:1px;height:22px;background:#b6bdc4;"></div>
<div class="a" style="left:330px;top:340px;width:1px;height:20px;background:#b6bdc4;"></div>
<div class="a" style="left:356px;top:340px;width:1px;height:20px;background:#b6bdc4;"></div>
<div class="a" style="left:305px;top:360px;width:1396px;height:1px;background:#b6bdc4;"></div>
<svg class="a" style="left:310.5px;top:343.5px" width="15" height="12.5" viewBox="0 0 576 512" preserveAspectRatio="none"><path fill="#838383" d="M542.22 32.05c-54.8 3.11-163.72 14.43-230.96 55.59-4.64 2.84-7.27 7.89-7.27 13.17v363.87c0 11.55 12.63 18.85 23.28 13.49 69.18-34.82 169.23-44.32 218.7-46.92 16.89-.89 30.02-14.43 30.02-30.66V62.75c.01-17.71-15.35-31.74-33.77-30.7zM264.73 87.64C197.5 46.48 88.58 35.170 33.78 32.05 15.36 31.01 0 45.04 0 62.75V400.6c0 16.24 13.13 29.78 30.02 30.66 49.49 2.6 149.59 12.11 218.77 46.950 10.62 5.35 23.21-1.94 23.21-13.46V100.63c0-5.29-2.62-10.14-7.27-12.99z"/></svg>
<svg class="a" style="left:336.0px;top:344px" width="15" height="13" viewBox="0 0 576 512" preserveAspectRatio="none"><path fill="#34589c" stroke="#34589c" stroke-width="6" d="M402.3 344.9l32-32c5-5 13.7-1.5 13.7 5.7V464c0 26.5-21.5 48-48 48H48c-26.5 0-48-21.5-48-48V112c0-26.5 21.5-48 48-48h273.5c7.1 0 10.7 8.6 5.7 13.7l-32 32c-1.5 1.5-3.5 2.3-5.7 2.3H48v352h352V350.5c0-2.1.8-4.1 2.3-5.6zm156.6-201.8L296.3 405.7l-90.4 10c-26.2 2.9-48.5-19.2-45.6-45.6l10-90.4L432.9 17.1c22.9-22.9 59.9-22.9 82.7 0l43.2 43.2c22.9 22.9 22.9 60 .1 82.8zM460.1 174L402 115.9 216.2 301.8l-7.3 65.3 65.3-7.3L460.1 174zm64.8-79.7l-43.2-43.2c-4.1-4.1-10.8-4.1-14.8 0L436 82l58.1 58.1 30.9-30.9c4-4.2 4-10.8-.1-14.9z"/></svg>
<div class="a t" style="left:362.5px;top:341px">15 - záhady</div>
<div class="a" style="left:306px;top:361px;width:1394px;height:20px;background:#f0ffff;"></div>
<div class="a" style="left:305px;top:360px;width:1px;height:22px;background:#b6bdc4;"></div>
<div class="a" style="left:1700px;top:360px;width:1px;height:22px;background:#b6bdc4;"></div>
<div class="a" style="left:330px;top:361px;width:1px;height:20px;background:#b6bdc4;"></div>
<div class="a" style="left:356px;top:361px;width:1px;height:20px;background:#b6bdc4;"></div>
<div class="a" style="left:305px;top:381px;width:1396px;height:1px;background:#b6bdc4;"></div>
<svg class="a" style="left:310.5px;top:364.5px" width="15" height="12.5" viewBox="0 0 576 512" preserveAspectRatio="none"><path fill="#838383" d="M542.22 32.05c-54.8 3.11-163.72 14.43-230.96 55.59-4.64 2.84-7.27 7.89-7.27 13.17v363.87c0 11.55 12.63 18.85 23.28 13.49 69.18-34.82 169.23-44.32 218.7-46.92 16.89-.89 30.02-14.43 30.02-30.66V62.75c.01-17.71-15.35-31.74-33.77-30.7zM264.73 87.64C197.5 46.48 88.58 35.170 33.78 32.05 15.36 31.01 0 45.04 0 62.75V400.6c0 16.24 13.13 29.78 30.02 30.66 49.49 2.6 149.59 12.11 218.77 46.950 10.62 5.35 23.21-1.94 23.21-13.46V100.63c0-5.29-2.62-10.14-7.27-12.99z"/></svg>
<svg class="a" style="left:336.0px;top:365px" width="15" height="13" viewBox="0 0 576 512" preserveAspectRatio="none"><path fill="#34589c" stroke="#34589c" stroke-width="6" d="M402.3 344.9l32-32c5-5 13.7-1.5 13.7 5.7V464c0 26.5-21.5 48-48 48H48c-26.5 0-48-21.5-48-48V112c0-26.5 21.5-48 48-48h273.5c7.1 0 10.7 8.6 5.7 13.7l-32 32c-1.5 1.5-3.5 2.3-5.7 2.3H48v352h352V350.5c0-2.1.8-4.1 2.3-5.6zm156.6-201.8L296.3 405.7l-90.4 10c-26.2 2.9-48.5-19.2-45.6-45.6l10-90.4L432.9 17.1c22.9-22.9 59.9-22.9 82.7 0l43.2 43.2c22.9 22.9 22.9 60 .1 82.8zM460.1 174L402 115.9 216.2 301.8l-7.3 65.3 65.3-7.3L460.1 174zm64.8-79.7l-43.2-43.2c-4.1-4.1-10.8-4.1-14.8 0L436 82l58.1 58.1 30.9-30.9c4-4.2 4-10.8-.1-14.9z"/></svg>
<div class="a t" style="left:362.5px;top:362px">16 - Magie, čarodějnictví</div>
<div class="a" style="left:306px;top:382px;width:1394px;height:20px;background:#c3e4fb;"></div>
<div class="a" style="left:305px;top:381px;width:1px;height:22px;background:#b6bdc4;"></div>
<div class="a" style="left:1700px;top:381px;width:1px;height:22px;background:#b6bdc4;"></div>
<div class="a" style="left:330px;top:382px;width:1px;height:20px;background:#b6bdc4;"></div>
<div class="a" style="left:356px;top:382px;width:1px;height:20px;background:#b6bdc4;"></div>
<div class="a" style="left:305px;top:402px;width:1396px;height:1px;background:#b6bdc4;"></div>
<svg class="a" style="left:310.5px;top:385.5px" width="15" height="12.5" viewBox="0 0 576 512" preserveAspectRatio="none"><path fill="#838383" d="M542.22 32.05c-54.8 3.11-163.72 14.43-230.96 55.59-4.64 2.84-7.27 7.89-7.27 13.17v363.87c0 11.55 12.63 18.85 23.28 13.49 69.18-34.82 169.23-44.32 218.7-46.92 16.89-.89 30.02-14.43 30.02-30.66V62.75c.01-17.71-15.35-31.74-33.77-30.7zM264.73 87.64C197.5 46.48 88.58 35.170 33.78 32.05 15.36 31.01 0 45.04 0 62.75V400.6c0 16.24 13.13 29.78 30.02 30.66 49.49 2.6 149.59 12.11 218.77 46.950 10.62 5.35 23.21-1.94 23.21-13.46V100.63c0-5.29-2.62-10.14-7.27-12.99z"/></svg>
<svg class="a" style="left:336.0px;top:386px" width="15" height="13" viewBox="0 0 576 512" preserveAspectRatio="none"><path fill="#34589c" stroke="#34589c" stroke-width="6" d="M402.3 344.9l32-32c5-5 13.7-1.5 13.7 5.7V464c0 26.5-21.5 48-48 48H48c-26.5 0-48-21.5-48-48V112c0-26.5 21.5-48 48-48h273.5c7.1 0 10.7 8.6 5.7 13.7l-32 32c-1.5 1.5-3.5 2.3-5.7 2.3H48v352h352V350.5c0-2.1.8-4.1 2.3-5.6zm156.6-201.8L296.3 405.7l-90.4 10c-26.2 2.9-48.5-19.2-45.6-45.6l10-90.4L432.9 17.1c22.9-22.9 59.9-22.9 82.7 0l43.2 43.2c22.9 22.9 22.9 60 .1 82.8zM460.1 174L402 115.9 216.2 301.8l-7.3 65.3 65.3-7.3L460.1 174zm64.8-79.7l-43.2-43.2c-4.1-4.1-10.8-4.1-14.8 0L436 82l58.1 58.1 30.9-30.9c4-4.2 4-10.8-.1-14.9z"/></svg>
<div class="a t" style="left:362.5px;top:383px">99 - ostatní</div>
<div class="a" style="left:248px;top:106px;width:1px;height:299px;background:#b6bdc4;"></div>
<div class="a" style="left:299px;top:106px;width:1px;height:299px;background:#b6bdc4;"></div>
<div class="a" style="left:1706px;top:106px;width:1px;height:299px;background:#b6bdc4;"></div>
<div class="a" style="left:248px;top:405px;width:1459px;height:1px;background:#b6bdc4;"></div>
<div class="a" style="left:249px;top:406px;width:1457px;height:20px;background:#c3e4fb;"></div>
<div class="a" style="left:248px;top:405px;width:1px;height:22px;background:#b6bdc4;"></div>
<div class="a" style="left:1706px;top:405px;width:1px;height:22px;background:#b6bdc4;"></div>
<div class="a" style="left:273px;top:406px;width:1px;height:20px;background:#b6bdc4;"></div>
<div class="a" style="left:299px;top:406px;width:1px;height:20px;background:#b6bdc4;"></div>
<div class="a" style="left:248px;top:426px;width:1459px;height:1px;background:#b6bdc4;"></div>
<svg class="a" style="left:253.5px;top:409.5px" width="15" height="12.5" viewBox="0 0 576 512" preserveAspectRatio="none"><path fill="#0b419e" d="M542.22 32.05c-54.8 3.11-163.72 14.43-230.96 55.59-4.64 2.84-7.27 7.89-7.27 13.17v363.87c0 11.55 12.63 18.85 23.28 13.49 69.18-34.82 169.23-44.32 218.7-46.92 16.89-.89 30.02-14.43 30.02-30.66V62.75c.01-17.71-15.35-31.74-33.77-30.7zM264.73 87.64C197.5 46.48 88.58 35.170 33.78 32.05 15.36 31.01 0 45.04 0 62.75V400.6c0 16.24 13.13 29.78 30.02 30.66 49.49 2.6 149.59 12.11 218.77 46.950 10.62 5.35 23.21-1.94 23.21-13.46V100.63c0-5.29-2.62-10.14-7.27-12.99z"/></svg>
<svg class="a" style="left:279.0px;top:410px" width="15" height="13" viewBox="0 0 576 512" preserveAspectRatio="none"><path fill="#34589c" stroke="#34589c" stroke-width="6" d="M402.3 344.9l32-32c5-5 13.7-1.5 13.7 5.7V464c0 26.5-21.5 48-48 48H48c-26.5 0-48-21.5-48-48V112c0-26.5 21.5-48 48-48h273.5c7.1 0 10.7 8.6 5.7 13.7l-32 32c-1.5 1.5-3.5 2.3-5.7 2.3H48v352h352V350.5c0-2.1.8-4.1 2.3-5.6zm156.6-201.8L296.3 405.7l-90.4 10c-26.2 2.9-48.5-19.2-45.6-45.6l10-90.4L432.9 17.1c22.9-22.9 59.9-22.9 82.7 0l43.2 43.2c22.9 22.9 22.9 60 .1 82.8zM460.1 174L402 115.9 216.2 301.8l-7.3 65.3 65.3-7.3L460.1 174zm64.8-79.7l-43.2-43.2c-4.1-4.1-10.8-4.1-14.8 0L436 82l58.1 58.1 30.9-30.9c4-4.2 4-10.8-.1-14.9z"/></svg>
<svg class="a" style="left:304px;top:410px" width="8" height="12" viewBox="0 0 8 12"><path d="M1.5 1.2 L6.2 6 L1.5 10.8" stroke="#000" stroke-width="2.1" fill="none"/></svg>
<div class="a t" style="left:318.5px;top:407px">00-Ostatní-DPH 9%</div>
<div class="a" style="left:305px;top:429px;width:1396px;height:1px;background:#b6bdc4;"></div>
<div class="a" style="left:306px;top:430px;width:1394px;height:20px;background:#f0ffff;"></div>
<div class="a" style="left:305px;top:429px;width:1px;height:22px;background:#b6bdc4;"></div>
<div class="a" style="left:1700px;top:429px;width:1px;height:22px;background:#b6bdc4;"></div>
<div class="a" style="left:330px;top:430px;width:1px;height:20px;background:#b6bdc4;"></div>
<div class="a" style="left:356px;top:430px;width:1px;height:20px;background:#b6bdc4;"></div>
<div class="a" style="left:305px;top:450px;width:1396px;height:1px;background:#b6bdc4;"></div>
<svg class="a" style="left:310.5px;top:433.5px" width="15" height="12.5" viewBox="0 0 576 512" preserveAspectRatio="none"><path fill="#838383" d="M542.22 32.05c-54.8 3.11-163.72 14.43-230.96 55.59-4.64 2.84-7.27 7.89-7.27 13.17v363.87c0 11.55 12.63 18.85 23.28 13.49 69.18-34.82 169.23-44.32 218.7-46.92 16.89-.89 30.02-14.43 30.02-30.66V62.75c.01-17.71-15.35-31.74-33.77-30.7zM264.73 87.64C197.5 46.48 88.58 35.170 33.78 32.05 15.36 31.01 0 45.04 0 62.75V400.6c0 16.24 13.13 29.78 30.02 30.66 49.49 2.6 149.59 12.11 218.77 46.950 10.62 5.35 23.21-1.94 23.21-13.46V100.63c0-5.29-2.62-10.14-7.27-12.99z"/></svg>
<svg class="a" style="left:336.0px;top:434px" width="15" height="13" viewBox="0 0 576 512" preserveAspectRatio="none"><path fill="#34589c" stroke="#34589c" stroke-width="6" d="M402.3 344.9l32-32c5-5 13.7-1.5 13.7 5.7V464c0 26.5-21.5 48-48 48H48c-26.5 0-48-21.5-48-48V112c0-26.5 21.5-48 48-48h273.5c7.1 0 10.7 8.6 5.7 13.7l-32 32c-1.5 1.5-3.5 2.3-5.7 2.3H48v352h352V350.5c0-2.1.8-4.1 2.3-5.6zm156.6-201.8L296.3 405.7l-90.4 10c-26.2 2.9-48.5-19.2-45.6-45.6l10-90.4L432.9 17.1c22.9-22.9 59.9-22.9 82.7 0l43.2 43.2c22.9 22.9 22.9 60 .1 82.8zM460.1 174L402 115.9 216.2 301.8l-7.3 65.3 65.3-7.3L460.1 174zm64.8-79.7l-43.2-43.2c-4.1-4.1-10.8-4.1-14.8 0L436 82l58.1 58.1 30.9-30.9c4-4.2 4-10.8-.1-14.9z"/></svg>
<div class="a t" style="left:362.5px;top:431px">15 - kazety, video 19%</div>
<div class="a" style="left:306px;top:451px;width:1394px;height:20px;background:#c3e4fb;"></div>
<div class="a" style="left:305px;top:450px;width:1px;height:22px;background:#b6bdc4;"></div>
<div class="a" style="left:1700px;top:450px;width:1px;height:22px;background:#b6bdc4;"></div>
<div class="a" style="left:330px;top:451px;width:1px;height:20px;background:#b6bdc4;"></div>
<div class="a" style="left:356px;top:451px;width:1px;height:20px;background:#b6bdc4;"></div>
<div class="a" style="left:305px;top:471px;width:1396px;height:1px;background:#b6bdc4;"></div>
<svg class="a" style="left:310.5px;top:454.5px" width="15" height="12.5" viewBox="0 0 576 512" preserveAspectRatio="none"><path fill="#838383" d="M542.22 32.05c-54.8 3.11-163.72 14.43-230.96 55.59-4.64 2.84-7.27 7.89-7.27 13.17v363.87c0 11.55 12.63 18.85 23.28 13.49 69.18-34.82 169.23-44.32 218.7-46.92 16.89-.89 30.02-14.43 30.02-30.66V62.75c.01-17.71-15.35-31.74-33.77-30.7zM264.73 87.64C197.5 46.48 88.58 35.170 33.78 32.05 15.36 31.01 0 45.04 0 62.75V400.6c0 16.24 13.13 29.78 30.02 30.66 49.49 2.6 149.59 12.11 218.77 46.950 10.62 5.35 23.21-1.94 23.21-13.46V100.63c0-5.29-2.62-10.14-7.27-12.99z"/></svg>
<svg class="a" style="left:336.0px;top:455px" width="15" height="13" viewBox="0 0 576 512" preserveAspectRatio="none"><path fill="#34589c" stroke="#34589c" stroke-width="6" d="M402.3 344.9l32-32c5-5 13.7-1.5 13.7 5.7V464c0 26.5-21.5 48-48 48H48c-26.5 0-48-21.5-48-48V112c0-26.5 21.5-48 48-48h273.5c7.1 0 10.7 8.6 5.7 13.7l-32 32c-1.5 1.5-3.5 2.3-5.7 2.3H48v352h352V350.5c0-2.1.8-4.1 2.3-5.6zm156.6-201.8L296.3 405.7l-90.4 10c-26.2 2.9-48.5-19.2-45.6-45.6l10-90.4L432.9 17.1c22.9-22.9 59.9-22.9 82.7 0l43.2 43.2c22.9 22.9 22.9 60 .1 82.8zM460.1 174L402 115.9 216.2 301.8l-7.3 65.3 65.3-7.3L460.1 174zm64.8-79.7l-43.2-43.2c-4.1-4.1-10.8-4.1-14.8 0L436 82l58.1 58.1 30.9-30.9c4-4.2 4-10.8-.1-14.9z"/></svg>
<div class="a t" style="left:362.5px;top:452px">19 - Plakáty 19%</div>
<div class="a" style="left:306px;top:472px;width:1394px;height:20px;background:#f0ffff;"></div>
<div class="a" style="left:305px;top:471px;width:1px;height:22px;background:#b6bdc4;"></div>
<div class="a" style="left:1700px;top:471px;width:1px;height:22px;background:#b6bdc4;"></div>
<div class="a" style="left:330px;top:472px;width:1px;height:20px;background:#b6bdc4;"></div>
<div class="a" style="left:356px;top:472px;width:1px;height:20px;background:#b6bdc4;"></div>
<div class="a" style="left:305px;top:492px;width:1396px;height:1px;background:#b6bdc4;"></div>
<svg class="a" style="left:310.5px;top:475.5px" width="15" height="12.5" viewBox="0 0 576 512" preserveAspectRatio="none"><path fill="#838383" d="M542.22 32.05c-54.8 3.11-163.72 14.43-230.96 55.59-4.64 2.84-7.27 7.89-7.27 13.17v363.87c0 11.55 12.63 18.85 23.28 13.49 69.18-34.82 169.23-44.32 218.7-46.92 16.89-.89 30.02-14.43 30.02-30.66V62.75c.01-17.71-15.35-31.74-33.77-30.7zM264.73 87.64C197.5 46.48 88.58 35.170 33.78 32.05 15.36 31.01 0 45.04 0 62.75V400.6c0 16.24 13.13 29.78 30.02 30.66 49.49 2.6 149.59 12.11 218.77 46.950 10.62 5.35 23.21-1.94 23.21-13.46V100.63c0-5.29-2.62-10.14-7.27-12.99z"/></svg>
<svg class="a" style="left:336.0px;top:476px" width="15" height="13" viewBox="0 0 576 512" preserveAspectRatio="none"><path fill="#34589c" stroke="#34589c" stroke-width="6" d="M402.3 344.9l32-32c5-5 13.7-1.5 13.7 5.7V464c0 26.5-21.5 48-48 48H48c-26.5 0-48-21.5-48-48V112c0-26.5 21.5-48 48-48h273.5c7.1 0 10.7 8.6 5.7 13.7l-32 32c-1.5 1.5-3.5 2.3-5.7 2.3H48v352h352V350.5c0-2.1.8-4.1 2.3-5.6zm156.6-201.8L296.3 405.7l-90.4 10c-26.2 2.9-48.5-19.2-45.6-45.6l10-90.4L432.9 17.1c22.9-22.9 59.9-22.9 82.7 0l43.2 43.2c22.9 22.9 22.9 60 .1 82.8zM460.1 174L402 115.9 216.2 301.8l-7.3 65.3 65.3-7.3L460.1 174zm64.8-79.7l-43.2-43.2c-4.1-4.1-10.8-4.1-14.8 0L436 82l58.1 58.1 30.9-30.9c4-4.2 4-10.8-.1-14.9z"/></svg>
<div class="a t" style="left:362.5px;top:473px">25 - omal,vystřihovánky 9%</div>
<div class="a" style="left:306px;top:493px;width:1394px;height:20px;background:#c3e4fb;"></div>
<div class="a" style="left:305px;top:492px;width:1px;height:22px;background:#b6bdc4;"></div>
<div class="a" style="left:1700px;top:492px;width:1px;height:22px;background:#b6bdc4;"></div>
<div class="a" style="left:330px;top:493px;width:1px;height:20px;background:#b6bdc4;"></div>
<div class="a" style="left:356px;top:493px;width:1px;height:20px;background:#b6bdc4;"></div>
<div class="a" style="left:305px;top:513px;width:1396px;height:1px;background:#b6bdc4;"></div>
<svg class="a" style="left:310.5px;top:496.5px" width="15" height="12.5" viewBox="0 0 576 512" preserveAspectRatio="none"><path fill="#838383" d="M542.22 32.05c-54.8 3.11-163.72 14.43-230.96 55.59-4.64 2.84-7.27 7.89-7.27 13.17v363.87c0 11.55 12.63 18.85 23.28 13.49 69.18-34.82 169.23-44.32 218.7-46.92 16.89-.89 30.02-14.43 30.02-30.66V62.75c.01-17.71-15.35-31.74-33.77-30.7zM264.73 87.64C197.5 46.48 88.58 35.170 33.78 32.05 15.36 31.01 0 45.04 0 62.75V400.6c0 16.24 13.13 29.78 30.02 30.66 49.49 2.6 149.59 12.11 218.77 46.950 10.62 5.35 23.21-1.94 23.21-13.46V100.63c0-5.29-2.62-10.14-7.27-12.99z"/></svg>
<svg class="a" style="left:336.0px;top:497px" width="15" height="13" viewBox="0 0 576 512" preserveAspectRatio="none"><path fill="#34589c" stroke="#34589c" stroke-width="6" d="M402.3 344.9l32-32c5-5 13.7-1.5 13.7 5.7V464c0 26.5-21.5 48-48 48H48c-26.5 0-48-21.5-48-48V112c0-26.5 21.5-48 48-48h273.5c7.1 0 10.7 8.6 5.7 13.7l-32 32c-1.5 1.5-3.5 2.3-5.7 2.3H48v352h352V350.5c0-2.1.8-4.1 2.3-5.6zm156.6-201.8L296.3 405.7l-90.4 10c-26.2 2.9-48.5-19.2-45.6-45.6l10-90.4L432.9 17.1c22.9-22.9 59.9-22.9 82.7 0l43.2 43.2c22.9 22.9 22.9 60 .1 82.8zM460.1 174L402 115.9 216.2 301.8l-7.3 65.3 65.3-7.3L460.1 174zm64.8-79.7l-43.2-43.2c-4.1-4.1-10.8-4.1-14.8 0L436 82l58.1 58.1 30.9-30.9c4-4.2 4-10.8-.1-14.9z"/></svg>
<div class="a t" style="left:362.5px;top:494px">27 - Výrobky ze dřeva</div>
<div class="a" style="left:306px;top:514px;width:1394px;height:20px;background:#f0ffff;"></div>
<div class="a" style="left:305px;top:513px;width:1px;height:22px;background:#b6bdc4;"></div>
<div class="a" style="left:1700px;top:513px;width:1px;height:22px;background:#b6bdc4;"></div>
<div class="a" style="left:330px;top:514px;width:1px;height:20px;background:#b6bdc4;"></div>
<div class="a" style="left:356px;top:514px;width:1px;height:20px;background:#b6bdc4;"></div>
<div class="a" style="left:305px;top:534px;width:1396px;height:1px;background:#b6bdc4;"></div>
<svg class="a" style="left:310.5px;top:517.5px" width="15" height="12.5" viewBox="0 0 576 512" preserveAspectRatio="none"><path fill="#838383" d="M542.22 32.05c-54.8 3.11-163.72 14.43-230.96 55.59-4.64 2.84-7.27 7.89-7.27 13.17v363.87c0 11.55 12.63 18.85 23.28 13.49 69.18-34.82 169.23-44.32 218.7-46.92 16.89-.89 30.02-14.43 30.02-30.66V62.75c.01-17.71-15.35-31.74-33.77-30.7zM264.73 87.64C197.5 46.48 88.58 35.170 33.78 32.05 15.36 31.01 0 45.04 0 62.75V400.6c0 16.24 13.13 29.78 30.02 30.66 49.49 2.6 149.59 12.11 218.77 46.950 10.62 5.35 23.21-1.94 23.21-13.46V100.63c0-5.29-2.62-10.14-7.27-12.99z"/></svg>
<svg class="a" style="left:336.0px;top:518px" width="15" height="13" viewBox="0 0 576 512" preserveAspectRatio="none"><path fill="#34589c" stroke="#34589c" stroke-width="6" d="M402.3 344.9l32-32c5-5 13.7-1.5 13.7 5.7V464c0 26.5-21.5 48-48 48H48c-26.5 0-48-21.5-48-48V112c0-26.5 21.5-48 48-48h273.5c7.1 0 10.7 8.6 5.7 13.7l-32 32c-1.5 1.5-3.5 2.3-5.7 2.3H48v352h352V350.5c0-2.1.8-4.1 2.3-5.6zm156.6-201.8L296.3 405.7l-90.4 10c-26.2 2.9-48.5-19.2-45.6-45.6l10-90.4L432.9 17.1c22.9-22.9 59.9-22.9 82.7 0l43.2 43.2c22.9 22.9 22.9 60 .1 82.8zM460.1 174L402 115.9 216.2 301.8l-7.3 65.3 65.3-7.3L460.1 174zm64.8-79.7l-43.2-43.2c-4.1-4.1-10.8-4.1-14.8 0L436 82l58.1 58.1 30.9-30.9c4-4.2 4-10.8-.1-14.9z"/></svg>
<div class="a t" style="left:362.5px;top:515px">33 - Papír. zboží(pexeso) 19%</div>
<div class="a" style="left:248px;top:427px;width:1px;height:110px;background:#b6bdc4;"></div>
<div class="a" style="left:299px;top:427px;width:1px;height:110px;background:#b6bdc4;"></div>
<div class="a" style="left:1706px;top:427px;width:1px;height:110px;background:#b6bdc4;"></div>
<div class="a" style="left:248px;top:537px;width:1459px;height:1px;background:#b6bdc4;"></div>
<div class="a" style="left:249px;top:538px;width:1457px;height:20px;background:#f0ffff;"></div>
<div class="a" style="left:248px;top:537px;width:1px;height:22px;background:#b6bdc4;"></div>
<div class="a" style="left:1706px;top:537px;width:1px;height:22px;background:#b6bdc4;"></div>
<div class="a" style="left:273px;top:538px;width:1px;height:20px;background:#b6bdc4;"></div>
<div class="a" style="left:299px;top:538px;width:1px;height:20px;background:#b6bdc4;"></div>
<div class="a" style="left:248px;top:558px;width:1459px;height:1px;background:#b6bdc4;"></div>
<svg class="a" style="left:253.5px;top:541.5px" width="15" height="12.5" viewBox="0 0 576 512" preserveAspectRatio="none"><path fill="#0b419e" d="M542.22 32.05c-54.8 3.11-163.72 14.43-230.96 55.59-4.64 2.84-7.27 7.89-7.27 13.17v363.87c0 11.55 12.63 18.85 23.28 13.49 69.18-34.82 169.23-44.32 218.7-46.92 16.89-.89 30.02-14.43 30.02-30.66V62.75c.01-17.71-15.35-31.74-33.77-30.7zM264.73 87.64C197.5 46.48 88.58 35.170 33.78 32.05 15.36 31.01 0 45.04 0 62.75V400.6c0 16.24 13.13 29.78 30.02 30.66 49.49 2.6 149.59 12.11 218.77 46.950 10.62 5.35 23.21-1.94 23.21-13.46V100.63c0-5.29-2.62-10.14-7.27-12.99z"/></svg>
<svg class="a" style="left:279.0px;top:542px" width="15" height="13" viewBox="0 0 576 512" preserveAspectRatio="none"><path fill="#34589c" stroke="#34589c" stroke-width="6" d="M402.3 344.9l32-32c5-5 13.7-1.5 13.7 5.7V464c0 26.5-21.5 48-48 48H48c-26.5 0-48-21.5-48-48V112c0-26.5 21.5-48 48-48h273.5c7.1 0 10.7 8.6 5.7 13.7l-32 32c-1.5 1.5-3.5 2.3-5.7 2.3H48v352h352V350.5c0-2.1.8-4.1 2.3-5.6zm156.6-201.8L296.3 405.7l-90.4 10c-26.2 2.9-48.5-19.2-45.6-45.6l10-90.4L432.9 17.1c22.9-22.9 59.9-22.9 82.7 0l43.2 43.2c22.9 22.9 22.9 60 .1 82.8zM460.1 174L402 115.9 216.2 301.8l-7.3 65.3 65.3-7.3L460.1 174zm64.8-79.7l-43.2-43.2c-4.1-4.1-10.8-4.1-14.8 0L436 82l58.1 58.1 30.9-30.9c4-4.2 4-10.8-.1-14.9z"/></svg>
<div class="a t" style="left:305.5px;top:539px">00-TS knihy 19%</div>
<div class="a" style="left:249px;top:559px;width:1457px;height:20px;background:#c3e4fb;"></div>
<div class="a" style="left:248px;top:558px;width:1px;height:22px;background:#b6bdc4;"></div>
<div class="a" style="left:1706px;top:558px;width:1px;height:22px;background:#b6bdc4;"></div>
<div class="a" style="left:273px;top:559px;width:1px;height:20px;background:#b6bdc4;"></div>
<div class="a" style="left:299px;top:559px;width:1px;height:20px;background:#b6bdc4;"></div>
<div class="a" style="left:248px;top:579px;width:1459px;height:1px;background:#b6bdc4;"></div>
<svg class="a" style="left:253.5px;top:562.5px" width="15" height="12.5" viewBox="0 0 576 512" preserveAspectRatio="none"><path fill="#838383" d="M542.22 32.05c-54.8 3.11-163.72 14.43-230.96 55.59-4.64 2.84-7.27 7.89-7.27 13.17v363.87c0 11.55 12.63 18.85 23.28 13.49 69.18-34.82 169.23-44.32 218.7-46.92 16.89-.89 30.02-14.43 30.02-30.66V62.75c.01-17.71-15.35-31.74-33.77-30.7zM264.73 87.64C197.5 46.48 88.58 35.170 33.78 32.05 15.36 31.01 0 45.04 0 62.75V400.6c0 16.24 13.13 29.78 30.02 30.66 49.49 2.6 149.59 12.11 218.77 46.950 10.62 5.35 23.21-1.94 23.21-13.46V100.63c0-5.29-2.62-10.14-7.27-12.99z"/></svg>
<svg class="a" style="left:279.0px;top:563px" width="15" height="13" viewBox="0 0 576 512" preserveAspectRatio="none"><path fill="#34589c" stroke="#34589c" stroke-width="6" d="M402.3 344.9l32-32c5-5 13.7-1.5 13.7 5.7V464c0 26.5-21.5 48-48 48H48c-26.5 0-48-21.5-48-48V112c0-26.5 21.5-48 48-48h273.5c7.1 0 10.7 8.6 5.7 13.7l-32 32c-1.5 1.5-3.5 2.3-5.7 2.3H48v352h352V350.5c0-2.1.8-4.1 2.3-5.6zm156.6-201.8L296.3 405.7l-90.4 10c-26.2 2.9-48.5-19.2-45.6-45.6l10-90.4L432.9 17.1c22.9-22.9 59.9-22.9 82.7 0l43.2 43.2c22.9 22.9 22.9 60 .1 82.8zM460.1 174L402 115.9 216.2 301.8l-7.3 65.3 65.3-7.3L460.1 174zm64.8-79.7l-43.2-43.2c-4.1-4.1-10.8-4.1-14.8 0L436 82l58.1 58.1 30.9-30.9c4-4.2 4-10.8-.1-14.9z"/></svg>
<div class="a t" style="left:305.5px;top:560px">01 - akvaristika</div>
<div class="a" style="left:249px;top:580px;width:1457px;height:20px;background:#f0ffff;"></div>
<div class="a" style="left:248px;top:579px;width:1px;height:22px;background:#b6bdc4;"></div>
<div class="a" style="left:1706px;top:579px;width:1px;height:22px;background:#b6bdc4;"></div>
<div class="a" style="left:273px;top:580px;width:1px;height:20px;background:#b6bdc4;"></div>
<div class="a" style="left:299px;top:580px;width:1px;height:20px;background:#b6bdc4;"></div>
<div class="a" style="left:248px;top:600px;width:1459px;height:1px;background:#b6bdc4;"></div>
<svg class="a" style="left:253.5px;top:583.5px" width="15" height="12.5" viewBox="0 0 576 512" preserveAspectRatio="none"><path fill="#0b419e" d="M542.22 32.05c-54.8 3.11-163.72 14.43-230.96 55.59-4.64 2.84-7.27 7.89-7.27 13.17v363.87c0 11.55 12.63 18.85 23.28 13.49 69.18-34.82 169.23-44.32 218.7-46.92 16.89-.89 30.02-14.43 30.02-30.66V62.75c.01-17.71-15.35-31.74-33.77-30.7zM264.73 87.64C197.5 46.48 88.58 35.170 33.78 32.05 15.36 31.01 0 45.04 0 62.75V400.6c0 16.24 13.13 29.78 30.02 30.66 49.49 2.6 149.59 12.11 218.77 46.950 10.62 5.35 23.21-1.94 23.21-13.46V100.63c0-5.29-2.62-10.14-7.27-12.99z"/></svg>
<svg class="a" style="left:279.0px;top:584px" width="15" height="13" viewBox="0 0 576 512" preserveAspectRatio="none"><path fill="#34589c" stroke="#34589c" stroke-width="6" d="M402.3 344.9l32-32c5-5 13.7-1.5 13.7 5.7V464c0 26.5-21.5 48-48 48H48c-26.5 0-48-21.5-48-48V112c0-26.5 21.5-48 48-48h273.5c7.1 0 10.7 8.6 5.7 13.7l-32 32c-1.5 1.5-3.5 2.3-5.7 2.3H48v352h352V350.5c0-2.1.8-4.1 2.3-5.6zm156.6-201.8L296.3 405.7l-90.4 10c-26.2 2.9-48.5-19.2-45.6-45.6l10-90.4L432.9 17.1c22.9-22.9 59.9-22.9 82.7 0l43.2 43.2c22.9 22.9 22.9 60 .1 82.8zM460.1 174L402 115.9 216.2 301.8l-7.3 65.3 65.3-7.3L460.1 174zm64.8-79.7l-43.2-43.2c-4.1-4.1-10.8-4.1-14.8 0L436 82l58.1 58.1 30.9-30.9c4-4.2 4-10.8-.1-14.9z"/></svg>
<svg class="a" style="left:304px;top:584px" width="8" height="12" viewBox="0 0 8 12"><path d="M1.5 1.2 L6.2 6 L1.5 10.8" stroke="#000" stroke-width="2.1" fill="none"/></svg>
<div class="a t" style="left:318.5px;top:581px">01 - Ekonomika</div>
<div class="a" style="left:305px;top:603px;width:1396px;height:1px;background:#b6bdc4;"></div>
<div class="a" style="left:306px;top:604px;width:1394px;height:20px;background:#f0ffff;"></div>
<div class="a" style="left:305px;top:603px;width:1px;height:22px;background:#b6bdc4;"></div>
<div class="a" style="left:1700px;top:603px;width:1px;height:22px;background:#b6bdc4;"></div>
<div class="a" style="left:330px;top:604px;width:1px;height:20px;background:#b6bdc4;"></div>
<div class="a" style="left:356px;top:604px;width:1px;height:20px;background:#b6bdc4;"></div>
<div class="a" style="left:305px;top:624px;width:1396px;height:1px;background:#b6bdc4;"></div>
<svg class="a" style="left:310.5px;top:607.5px" width="15" height="12.5" viewBox="0 0 576 512" preserveAspectRatio="none"><path fill="#838383" d="M542.22 32.05c-54.8 3.11-163.72 14.43-230.96 55.59-4.64 2.84-7.27 7.89-7.27 13.17v363.87c0 11.55 12.63 18.85 23.28 13.49 69.18-34.82 169.23-44.32 218.7-46.92 16.89-.89 30.02-14.43 30.02-30.66V62.75c.01-17.71-15.35-31.74-33.77-30.7zM264.73 87.64C197.5 46.48 88.58 35.170 33.78 32.05 15.36 31.01 0 45.04 0 62.75V400.6c0 16.24 13.13 29.78 30.02 30.66 49.49 2.6 149.59 12.11 218.77 46.950 10.62 5.35 23.21-1.94 23.21-13.46V100.63c0-5.29-2.62-10.14-7.27-12.99z"/></svg>
<svg class="a" style="left:336.0px;top:608px" width="15" height="13" viewBox="0 0 576 512" preserveAspectRatio="none"><path fill="#34589c" stroke="#34589c" stroke-width="6" d="M402.3 344.9l32-32c5-5 13.7-1.5 13.7 5.7V464c0 26.5-21.5 48-48 48H48c-26.5 0-48-21.5-48-48V112c0-26.5 21.5-48 48-48h273.5c7.1 0 10.7 8.6 5.7 13.7l-32 32c-1.5 1.5-3.5 2.3-5.7 2.3H48v352h352V350.5c0-2.1.8-4.1 2.3-5.6zm156.6-201.8L296.3 405.7l-90.4 10c-26.2 2.9-48.5-19.2-45.6-45.6l10-90.4L432.9 17.1c22.9-22.9 59.9-22.9 82.7 0l43.2 43.2c22.9 22.9 22.9 60 .1 82.8zM460.1 174L402 115.9 216.2 301.8l-7.3 65.3 65.3-7.3L460.1 174zm64.8-79.7l-43.2-43.2c-4.1-4.1-10.8-4.1-14.8 0L436 82l58.1 58.1 30.9-30.9c4-4.2 4-10.8-.1-14.9z"/></svg>
<div class="a t" style="left:362.5px;top:605px">01 - bankovnictví</div>
<div class="a" style="left:306px;top:625px;width:1394px;height:20px;background:#c3e4fb;"></div>
<div class="a" style="left:305px;top:624px;width:1px;height:22px;background:#b6bdc4;"></div>
<div class="a" style="left:1700px;top:624px;width:1px;height:22px;background:#b6bdc4;"></div>
<div class="a" style="left:330px;top:625px;width:1px;height:20px;background:#b6bdc4;"></div>
<div class="a" style="left:356px;top:625px;width:1px;height:20px;background:#b6bdc4;"></div>
<div class="a" style="left:305px;top:645px;width:1396px;height:1px;background:#b6bdc4;"></div>
<svg class="a" style="left:310.5px;top:628.5px" width="15" height="12.5" viewBox="0 0 576 512" preserveAspectRatio="none"><path fill="#838383" d="M542.22 32.05c-54.8 3.11-163.72 14.43-230.96 55.59-4.64 2.84-7.27 7.89-7.27 13.17v363.87c0 11.55 12.63 18.85 23.28 13.49 69.18-34.82 169.23-44.32 218.7-46.92 16.89-.89 30.02-14.43 30.02-30.66V62.75c.01-17.71-15.35-31.74-33.77-30.7zM264.73 87.64C197.5 46.48 88.58 35.170 33.78 32.05 15.36 31.01 0 45.04 0 62.75V400.6c0 16.24 13.13 29.78 30.02 30.66 49.49 2.6 149.59 12.11 218.77 46.950 10.62 5.35 23.21-1.94 23.21-13.46V100.63c0-5.29-2.62-10.14-7.27-12.99z"/></svg>
<svg class="a" style="left:336.0px;top:629px" width="15" height="13" viewBox="0 0 576 512" preserveAspectRatio="none"><path fill="#34589c" stroke="#34589c" stroke-width="6" d="M402.3 344.9l32-32c5-5 13.7-1.5 13.7 5.7V464c0 26.5-21.5 48-48 48H48c-26.5 0-48-21.5-48-48V112c0-26.5 21.5-48 48-48h273.5c7.1 0 10.7 8.6 5.7 13.7l-32 32c-1.5 1.5-3.5 2.3-5.7 2.3H48v352h352V350.5c0-2.1.8-4.1 2.3-5.6zm156.6-201.8L296.3 405.7l-90.4 10c-26.2 2.9-48.5-19.2-45.6-45.6l10-90.4L432.9 17.1c22.9-22.9 59.9-22.9 82.7 0l43.2 43.2c22.9 22.9 22.9 60 .1 82.8zM460.1 174L402 115.9 216.2 301.8l-7.3 65.3 65.3-7.3L460.1 174zm64.8-79.7l-43.2-43.2c-4.1-4.1-10.8-4.1-14.8 0L436 82l58.1 58.1 30.9-30.9c4-4.2 4-10.8-.1-14.9z"/></svg>
<div class="a t" style="left:362.5px;top:626px">03 - daně</div>
<div class="a" style="left:306px;top:646px;width:1394px;height:20px;background:#f0ffff;"></div>
<div class="a" style="left:305px;top:645px;width:1px;height:22px;background:#b6bdc4;"></div>
<div class="a" style="left:1700px;top:645px;width:1px;height:22px;background:#b6bdc4;"></div>
<div class="a" style="left:330px;top:646px;width:1px;height:20px;background:#b6bdc4;"></div>
<div class="a" style="left:356px;top:646px;width:1px;height:20px;background:#b6bdc4;"></div>
<div class="a" style="left:305px;top:666px;width:1396px;height:1px;background:#b6bdc4;"></div>
<svg class="a" style="left:310.5px;top:649.5px" width="15" height="12.5" viewBox="0 0 576 512" preserveAspectRatio="none"><path fill="#838383" d="M542.22 32.05c-54.8 3.11-163.72 14.43-230.96 55.59-4.64 2.84-7.27 7.89-7.27 13.17v363.87c0 11.55 12.63 18.85 23.28 13.49 69.18-34.82 169.23-44.32 218.7-46.92 16.89-.89 30.02-14.43 30.02-30.66V62.75c.01-17.71-15.35-31.74-33.77-30.7zM264.73 87.64C197.5 46.48 88.58 35.170 33.78 32.05 15.36 31.01 0 45.04 0 62.75V400.6c0 16.24 13.13 29.78 30.02 30.66 49.49 2.6 149.59 12.11 218.77 46.950 10.62 5.35 23.21-1.94 23.21-13.46V100.63c0-5.29-2.62-10.14-7.27-12.99z"/></svg>
<svg class="a" style="left:336.0px;top:650px" width="15" height="13" viewBox="0 0 576 512" preserveAspectRatio="none"><path fill="#34589c" stroke="#34589c" stroke-width="6" d="M402.3 344.9l32-32c5-5 13.7-1.5 13.7 5.7V464c0 26.5-21.5 48-48 48H48c-26.5 0-48-21.5-48-48V112c0-26.5 21.5-48 48-48h273.5c7.1 0 10.7 8.6 5.7 13.7l-32 32c-1.5 1.5-3.5 2.3-5.7 2.3H48v352h352V350.5c0-2.1.8-4.1 2.3-5.6zm156.6-201.8L296.3 405.7l-90.4 10c-26.2 2.9-48.5-19.2-45.6-45.6l10-90.4L432.9 17.1c22.9-22.9 59.9-22.9 82.7 0l43.2 43.2c22.9 22.9 22.9 60 .1 82.8zM460.1 174L402 115.9 216.2 301.8l-7.3 65.3 65.3-7.3L460.1 174zm64.8-79.7l-43.2-43.2c-4.1-4.1-10.8-4.1-14.8 0L436 82l58.1 58.1 30.9-30.9c4-4.2 4-10.8-.1-14.9z"/></svg>
<div class="a t" style="left:362.5px;top:647px">04 - ekonomika</div>
<div class="a" style="left:306px;top:667px;width:1394px;height:20px;background:#c3e4fb;"></div>
<div class="a" style="left:305px;top:666px;width:1px;height:22px;background:#b6bdc4;"></div>
<div class="a" style="left:1700px;top:666px;width:1px;height:22px;background:#b6bdc4;"></div>
<div class="a" style="left:330px;top:667px;width:1px;height:20px;background:#b6bdc4;"></div>
<div class="a" style="left:356px;top:667px;width:1px;height:20px;background:#b6bdc4;"></div>
<div class="a" style="left:305px;top:687px;width:1396px;height:1px;background:#b6bdc4;"></div>
<svg class="a" style="left:310.5px;top:670.5px" width="15" height="12.5" viewBox="0 0 576 512" preserveAspectRatio="none"><path fill="#838383" d="M542.22 32.05c-54.8 3.11-163.72 14.43-230.96 55.59-4.64 2.84-7.27 7.89-7.27 13.17v363.87c0 11.55 12.63 18.85 23.28 13.49 69.18-34.82 169.23-44.32 218.7-46.92 16.89-.89 30.02-14.43 30.02-30.66V62.75c.01-17.71-15.35-31.74-33.77-30.7zM264.73 87.64C197.5 46.48 88.58 35.170 33.78 32.05 15.36 31.01 0 45.04 0 62.75V400.6c0 16.24 13.13 29.78 30.02 30.66 49.49 2.6 149.59 12.11 218.77 46.950 10.62 5.35 23.21-1.94 23.21-13.46V100.63c0-5.29-2.62-10.14-7.27-12.99z"/></svg>
<svg class="a" style="left:336.0px;top:671px" width="15" height="13" viewBox="0 0 576 512" preserveAspectRatio="none"><path fill="#34589c" stroke="#34589c" stroke-width="6" d="M402.3 344.9l32-32c5-5 13.7-1.5 13.7 5.7V464c0 26.5-21.5 48-48 48H48c-26.5 0-48-21.5-48-48V112c0-26.5 21.5-48 48-48h273.5c7.1 0 10.7 8.6 5.7 13.7l-32 32c-1.5 1.5-3.5 2.3-5.7 2.3H48v352h352V350.5c0-2.1.8-4.1 2.3-5.6zm156.6-201.8L296.3 405.7l-90.4 10c-26.2 2.9-48.5-19.2-45.6-45.6l10-90.4L432.9 17.1c22.9-22.9 59.9-22.9 82.7 0l43.2 43.2c22.9 22.9 22.9 60 .1 82.8zM460.1 174L402 115.9 216.2 301.8l-7.3 65.3 65.3-7.3L460.1 174zm64.8-79.7l-43.2-43.2c-4.1-4.1-10.8-4.1-14.8 0L436 82l58.1 58.1 30.9-30.9c4-4.2 4-10.8-.1-14.9z"/></svg>
<div class="a t" style="left:362.5px;top:668px">05 - obchod a podnikání</div>
<div class="a" style="left:306px;top:688px;width:1394px;height:20px;background:#f0ffff;"></div>
<div class="a" style="left:305px;top:687px;width:1px;height:22px;background:#b6bdc4;"></div>
<div class="a" style="left:1700px;top:687px;width:1px;height:22px;background:#b6bdc4;"></div>
<div class="a" style="left:330px;top:688px;width:1px;height:20px;background:#b6bdc4;"></div>
<div class="a" style="left:356px;top:688px;width:1px;height:20px;background:#b6bdc4;"></div>
<div class="a" style="left:305px;top:708px;width:1396px;height:1px;background:#b6bdc4;"></div>
<svg class="a" style="left:310.5px;top:691.5px" width="15" height="12.5" viewBox="0 0 576 512" preserveAspectRatio="none"><path fill="#838383" d="M542.22 32.05c-54.8 3.11-163.72 14.43-230.96 55.59-4.64 2.84-7.27 7.89-7.27 13.17v363.87c0 11.55 12.63 18.85 23.28 13.49 69.18-34.82 169.23-44.32 218.7-46.92 16.89-.89 30.02-14.43 30.02-30.66V62.75c.01-17.71-15.35-31.74-33.77-30.7zM264.73 87.64C197.5 46.48 88.58 35.170 33.78 32.05 15.36 31.01 0 45.04 0 62.75V400.6c0 16.24 13.13 29.78 30.02 30.66 49.49 2.6 149.59 12.11 218.77 46.950 10.62 5.35 23.21-1.94 23.21-13.46V100.63c0-5.29-2.62-10.14-7.27-12.99z"/></svg>
<svg class="a" style="left:336.0px;top:692px" width="15" height="13" viewBox="0 0 576 512" preserveAspectRatio="none"><path fill="#34589c" stroke="#34589c" stroke-width="6" d="M402.3 344.9l32-32c5-5 13.7-1.5 13.7 5.7V464c0 26.5-21.5 48-48 48H48c-26.5 0-48-21.5-48-48V112c0-26.5 21.5-48 48-48h273.5c7.1 0 10.7 8.6 5.7 13.7l-32 32c-1.5 1.5-3.5 2.3-5.7 2.3H48v352h352V350.5c0-2.1.8-4.1 2.3-5.6zm156.6-201.8L296.3 405.7l-90.4 10c-26.2 2.9-48.5-19.2-45.6-45.6l10-90.4L432.9 17.1c22.9-22.9 59.9-22.9 82.7 0l43.2 43.2c22.9 22.9 22.9 60 .1 82.8zM460.1 174L402 115.9 216.2 301.8l-7.3 65.3 65.3-7.3L460.1 174zm64.8-79.7l-43.2-43.2c-4.1-4.1-10.8-4.1-14.8 0L436 82l58.1 58.1 30.9-30.9c4-4.2 4-10.8-.1-14.9z"/></svg>
<div class="a t" style="left:362.5px;top:689px">07 - právnická literatura</div>
<div class="a" style="left:306px;top:709px;width:1394px;height:20px;background:#c3e4fb;"></div>
<div class="a" style="left:305px;top:708px;width:1px;height:22px;background:#b6bdc4;"></div>
<div class="a" style="left:1700px;top:708px;width:1px;height:22px;background:#b6bdc4;"></div>
<div class="a" style="left:330px;top:709px;width:1px;height:20px;background:#b6bdc4;"></div>
<div class="a" style="left:356px;top:709px;width:1px;height:20px;background:#b6bdc4;"></div>
<div class="a" style="left:305px;top:729px;width:1396px;height:1px;background:#b6bdc4;"></div>
<svg class="a" style="left:310.5px;top:712.5px" width="15" height="12.5" viewBox="0 0 576 512" preserveAspectRatio="none"><path fill="#838383" d="M542.22 32.05c-54.8 3.11-163.72 14.43-230.96 55.59-4.64 2.84-7.27 7.89-7.27 13.17v363.87c0 11.55 12.63 18.85 23.28 13.49 69.18-34.82 169.23-44.32 218.7-46.92 16.89-.89 30.02-14.43 30.02-30.66V62.75c.01-17.71-15.35-31.74-33.77-30.7zM264.73 87.64C197.5 46.48 88.58 35.170 33.78 32.05 15.36 31.01 0 45.04 0 62.75V400.6c0 16.24 13.13 29.78 30.02 30.66 49.49 2.6 149.59 12.11 218.77 46.950 10.62 5.35 23.21-1.94 23.21-13.46V100.63c0-5.29-2.62-10.14-7.27-12.99z"/></svg>
<svg class="a" style="left:336.0px;top:713px" width="15" height="13" viewBox="0 0 576 512" preserveAspectRatio="none"><path fill="#34589c" stroke="#34589c" stroke-width="6" d="M402.3 344.9l32-32c5-5 13.7-1.5 13.7 5.7V464c0 26.5-21.5 48-48 48H48c-26.5 0-48-21.5-48-48V112c0-26.5 21.5-48 48-48h273.5c7.1 0 10.7 8.6 5.7 13.7l-32 32c-1.5 1.5-3.5 2.3-5.7 2.3H48v352h352V350.5c0-2.1.8-4.1 2.3-5.6zm156.6-201.8L296.3 405.7l-90.4 10c-26.2 2.9-48.5-19.2-45.6-45.6l10-90.4L432.9 17.1c22.9-22.9 59.9-22.9 82.7 0l43.2 43.2c22.9 22.9 22.9 60 .1 82.8zM460.1 174L402 115.9 216.2 301.8l-7.3 65.3 65.3-7.3L460.1 174zm64.8-79.7l-43.2-43.2c-4.1-4.1-10.8-4.1-14.8 0L436 82l58.1 58.1 30.9-30.9c4-4.2 4-10.8-.1-14.9z"/></svg>
<div class="a t" style="left:362.5px;top:710px">08 - účetnictví</div>
<div class="a" style="left:306px;top:730px;width:1394px;height:20px;background:#f0ffff;"></div>
<div class="a" style="left:305px;top:729px;width:1px;height:22px;background:#b6bdc4;"></div>
<div class="a" style="left:1700px;top:729px;width:1px;height:22px;background:#b6bdc4;"></div>
<div class="a" style="left:330px;top:730px;width:1px;height:20px;background:#b6bdc4;"></div>
<div class="a" style="left:356px;top:730px;width:1px;height:20px;background:#b6bdc4;"></div>
<div class="a" style="left:305px;top:750px;width:1396px;height:1px;background:#b6bdc4;"></div>
<svg class="a" style="left:310.5px;top:733.5px" width="15" height="12.5" viewBox="0 0 576 512" preserveAspectRatio="none"><path fill="#838383" d="M542.22 32.05c-54.8 3.11-163.72 14.43-230.96 55.59-4.64 2.84-7.27 7.89-7.27 13.17v363.87c0 11.55 12.63 18.85 23.28 13.49 69.18-34.82 169.23-44.32 218.7-46.92 16.89-.89 30.02-14.43 30.02-30.66V62.75c.01-17.71-15.35-31.74-33.77-30.7zM264.73 87.64C197.5 46.48 88.58 35.170 33.78 32.05 15.36 31.01 0 45.04 0 62.75V400.6c0 16.24 13.13 29.78 30.02 30.66 49.49 2.6 149.59 12.11 218.77 46.950 10.62 5.35 23.21-1.94 23.21-13.46V100.63c0-5.29-2.62-10.14-7.27-12.99z"/></svg>
<svg class="a" style="left:336.0px;top:734px" width="15" height="13" viewBox="0 0 576 512" preserveAspectRatio="none"><path fill="#34589c" stroke="#34589c" stroke-width="6" d="M402.3 344.9l32-32c5-5 13.7-1.5 13.7 5.7V464c0 26.5-21.5 48-48 48H48c-26.5 0-48-21.5-48-48V112c0-26.5 21.5-48 48-48h273.5c7.1 0 10.7 8.6 5.7 13.7l-32 32c-1.5 1.5-3.5 2.3-5.7 2.3H48v352h352V350.5c0-2.1.8-4.1 2.3-5.6zm156.6-201.8L296.3 405.7l-90.4 10c-26.2 2.9-48.5-19.2-45.6-45.6l10-90.4L432.9 17.1c22.9-22.9 59.9-22.9 82.7 0l43.2 43.2c22.9 22.9 22.9 60 .1 82.8zM460.1 174L402 115.9 216.2 301.8l-7.3 65.3 65.3-7.3L460.1 174zm64.8-79.7l-43.2-43.2c-4.1-4.1-10.8-4.1-14.8 0L436 82l58.1 58.1 30.9-30.9c4-4.2 4-10.8-.1-14.9z"/></svg>
<div class="a t" style="left:362.5px;top:731px">99 - ostatní</div>
<div class="a" style="left:248px;top:601px;width:1px;height:152px;background:#b6bdc4;"></div>
<div class="a" style="left:299px;top:601px;width:1px;height:152px;background:#b6bdc4;"></div>
<div class="a" style="left:1706px;top:601px;width:1px;height:152px;background:#b6bdc4;"></div>
<div class="a" style="left:248px;top:753px;width:1459px;height:1px;background:#b6bdc4;"></div>
<div class="a" style="left:249px;top:754px;width:1457px;height:20px;background:#c3e4fb;"></div>
<div class="a" style="left:248px;top:753px;width:1px;height:22px;background:#b6bdc4;"></div>
<div class="a" style="left:1706px;top:753px;width:1px;height:22px;background:#b6bdc4;"></div>
<div class="a" style="left:273px;top:754px;width:1px;height:20px;background:#b6bdc4;"></div>
<div class="a" style="left:299px;top:754px;width:1px;height:20px;background:#b6bdc4;"></div>
<div class="a" style="left:248px;top:774px;width:1459px;height:1px;background:#b6bdc4;"></div>
<svg class="a" style="left:253.5px;top:757.5px" width="15" height="12.5" viewBox="0 0 576 512" preserveAspectRatio="none"><path fill="#0b419e" d="M542.22 32.05c-54.8 3.11-163.72 14.43-230.96 55.59-4.64 2.84-7.27 7.89-7.27 13.17v363.87c0 11.55 12.63 18.85 23.28 13.49 69.18-34.82 169.23-44.32 218.7-46.92 16.89-.89 30.02-14.43 30.02-30.66V62.75c.01-17.71-15.35-31.74-33.77-30.7zM264.73 87.64C197.5 46.48 88.58 35.170 33.78 32.05 15.36 31.01 0 45.04 0 62.75V400.6c0 16.24 13.13 29.78 30.02 30.66 49.49 2.6 149.59 12.11 218.77 46.950 10.62 5.35 23.21-1.94 23.21-13.46V100.63c0-5.29-2.62-10.14-7.27-12.99z"/></svg>
<svg class="a" style="left:279.0px;top:758px" width="15" height="13" viewBox="0 0 576 512" preserveAspectRatio="none"><path fill="#34589c" stroke="#34589c" stroke-width="6" d="M402.3 344.9l32-32c5-5 13.7-1.5 13.7 5.7V464c0 26.5-21.5 48-48 48H48c-26.5 0-48-21.5-48-48V112c0-26.5 21.5-48 48-48h273.5c7.1 0 10.7 8.6 5.7 13.7l-32 32c-1.5 1.5-3.5 2.3-5.7 2.3H48v352h352V350.5c0-2.1.8-4.1 2.3-5.6zm156.6-201.8L296.3 405.7l-90.4 10c-26.2 2.9-48.5-19.2-45.6-45.6l10-90.4L432.9 17.1c22.9-22.9 59.9-22.9 82.7 0l43.2 43.2c22.9 22.9 22.9 60 .1 82.8zM460.1 174L402 115.9 216.2 301.8l-7.3 65.3 65.3-7.3L460.1 174zm64.8-79.7l-43.2-43.2c-4.1-4.1-10.8-4.1-14.8 0L436 82l58.1 58.1 30.9-30.9c4-4.2 4-10.8-.1-14.9z"/></svg>
<div class="a t" style="left:305.5px;top:755px">01 TS -Ekonomie-9%</div>
<div class="a" style="left:249px;top:775px;width:1457px;height:20px;background:#f0ffff;"></div>
<div class="a" style="left:248px;top:774px;width:1px;height:22px;background:#b6bdc4;"></div>
<div class="a" style="left:1706px;top:774px;width:1px;height:22px;background:#b6bdc4;"></div>
<div class="a" style="left:273px;top:775px;width:1px;height:20px;background:#b6bdc4;"></div>
<div class="a" style="left:299px;top:775px;width:1px;height:20px;background:#b6bdc4;"></div>
<div class="a" style="left:248px;top:795px;width:1459px;height:1px;background:#b6bdc4;"></div>
<svg class="a" style="left:253.5px;top:778.5px" width="15" height="12.5" viewBox="0 0 576 512" preserveAspectRatio="none"><path fill="#838383" d="M542.22 32.05c-54.8 3.11-163.72 14.43-230.96 55.59-4.64 2.84-7.27 7.89-7.27 13.17v363.87c0 11.55 12.63 18.85 23.28 13.49 69.18-34.82 169.23-44.32 218.7-46.92 16.89-.89 30.02-14.43 30.02-30.66V62.75c.01-17.71-15.35-31.74-33.77-30.7zM264.73 87.64C197.5 46.48 88.58 35.170 33.78 32.05 15.36 31.01 0 45.04 0 62.75V400.6c0 16.24 13.13 29.78 30.02 30.66 49.49 2.6 149.59 12.11 218.77 46.950 10.62 5.35 23.21-1.94 23.21-13.46V100.63c0-5.29-2.62-10.14-7.27-12.99z"/></svg>
<svg class="a" style="left:279.0px;top:779px" width="15" height="13" viewBox="0 0 576 512" preserveAspectRatio="none"><path fill="#34589c" stroke="#34589c" stroke-width="6" d="M402.3 344.9l32-32c5-5 13.7-1.5 13.7 5.7V464c0 26.5-21.5 48-48 48H48c-26.5 0-48-21.5-48-48V112c0-26.5 21.5-48 48-48h273.5c7.1 0 10.7 8.6 5.7 13.7l-32 32c-1.5 1.5-3.5 2.3-5.7 2.3H48v352h352V350.5c0-2.1.8-4.1 2.3-5.6zm156.6-201.8L296.3 405.7l-90.4 10c-26.2 2.9-48.5-19.2-45.6-45.6l10-90.4L432.9 17.1c22.9-22.9 59.9-22.9 82.7 0l43.2 43.2c22.9 22.9 22.9 60 .1 82.8zM460.1 174L402 115.9 216.2 301.8l-7.3 65.3 65.3-7.3L460.1 174zm64.8-79.7l-43.2-43.2c-4.1-4.1-10.8-4.1-14.8 0L436 82l58.1 58.1 30.9-30.9c4-4.2 4-10.8-.1-14.9z"/></svg>
<div class="a t" style="left:305.5px;top:776px">02 - chovatelství</div>
<div class="a" style="left:249px;top:796px;width:1457px;height:20px;background:#c3e4fb;"></div>
<div class="a" style="left:248px;top:795px;width:1px;height:22px;background:#b6bdc4;"></div>
<div class="a" style="left:1706px;top:795px;width:1px;height:22px;background:#b6bdc4;"></div>
<div class="a" style="left:273px;top:796px;width:1px;height:20px;background:#b6bdc4;"></div>
<div class="a" style="left:299px;top:796px;width:1px;height:20px;background:#b6bdc4;"></div>
<div class="a" style="left:248px;top:816px;width:1459px;height:1px;background:#b6bdc4;"></div>
<svg class="a" style="left:253.5px;top:799.5px" width="15" height="12.5" viewBox="0 0 576 512" preserveAspectRatio="none"><path fill="#0b419e" d="M542.22 32.05c-54.8 3.11-163.72 14.43-230.96 55.59-4.64 2.84-7.27 7.89-7.27 13.17v363.87c0 11.55 12.63 18.85 23.28 13.49 69.18-34.82 169.23-44.32 218.7-46.92 16.89-.89 30.02-14.43 30.02-30.66V62.75c.01-17.71-15.35-31.74-33.77-30.7zM264.73 87.64C197.5 46.48 88.58 35.170 33.78 32.05 15.36 31.01 0 45.04 0 62.75V400.6c0 16.24 13.13 29.78 30.02 30.66 49.49 2.6 149.59 12.11 218.77 46.950 10.62 5.35 23.21-1.94 23.21-13.46V100.63c0-5.29-2.62-10.14-7.27-12.99z"/></svg>
<svg class="a" style="left:279.0px;top:800px" width="15" height="13" viewBox="0 0 576 512" preserveAspectRatio="none"><path fill="#34589c" stroke="#34589c" stroke-width="6" d="M402.3 344.9l32-32c5-5 13.7-1.5 13.7 5.7V464c0 26.5-21.5 48-48 48H48c-26.5 0-48-21.5-48-48V112c0-26.5 21.5-48 48-48h273.5c7.1 0 10.7 8.6 5.7 13.7l-32 32c-1.5 1.5-3.5 2.3-5.7 2.3H48v352h352V350.5c0-2.1.8-4.1 2.3-5.6zm156.6-201.8L296.3 405.7l-90.4 10c-26.2 2.9-48.5-19.2-45.6-45.6l10-90.4L432.9 17.1c22.9-22.9 59.9-22.9 82.7 0l43.2 43.2c22.9 22.9 22.9 60 .1 82.8zM460.1 174L402 115.9 216.2 301.8l-7.3 65.3 65.3-7.3L460.1 174zm64.8-79.7l-43.2-43.2c-4.1-4.1-10.8-4.1-14.8 0L436 82l58.1 58.1 30.9-30.9c4-4.2 4-10.8-.1-14.9z"/></svg>
<svg class="a" style="left:304px;top:800px" width="8" height="12" viewBox="0 0 8 12"><path d="M1.5 1.2 L6.2 6 L1.5 10.8" stroke="#000" stroke-width="2.1" fill="none"/></svg>
<div class="a t" style="left:318.5px;top:797px">02 - Společenské vědy, osvěta</div>
</div>
<div class="a" style="left:1903px;top:79px;width:17px;height:809px;background:#f1f1f1"></div>
<svg class="a" style="left:1907px;top:85px" width="9" height="6" viewBox="0 0 9 6"><path d="M0.5 5.5 L4.5 0.5 L8.5 5.5Z" fill="#a3a3a3"/></svg>
<div class="a" style="left:1905px;top:96px;width:13px;height:42px;background:#c1c1c1"></div>
<svg class="a" style="left:1907px;top:876px" width="9" height="6" viewBox="0 0 9 6"><path d="M0.5 0.5 L4.5 5.5 L8.5 0.5Z" fill="#505050"/></svg>
<div class="a" style="left:0;top:888px;width:1920px;height:30px;background:#cfe4f2;border-top:1px solid #7a8088;border-left:1px solid #7a8088;border-right:1px solid #9aa0a8"></div>
<div class="a" style="left:0;top:918px;width:1920px;height:29px;background:#0044a3;border-top:1px solid #083a80"></div>
<div class="a" style="left:0;top:925px;width:1920px;text-align:center;font-weight:bold;font-size:13.5px;line-height:18px;color:#a8c8f8;letter-spacing:1.14px;-webkit-text-stroke:0.15px;white-space:pre">Počet titulů: 93654 | SHERPA v 5.0 | Copyright © 2001-2021 <span style="color:#fff">BetaZ.cz s.r.o.</span>, tel. +420 602 543 170 email <span style="color:#fff">jana.betaz@seznam.cz</span></div>
</body></html>
